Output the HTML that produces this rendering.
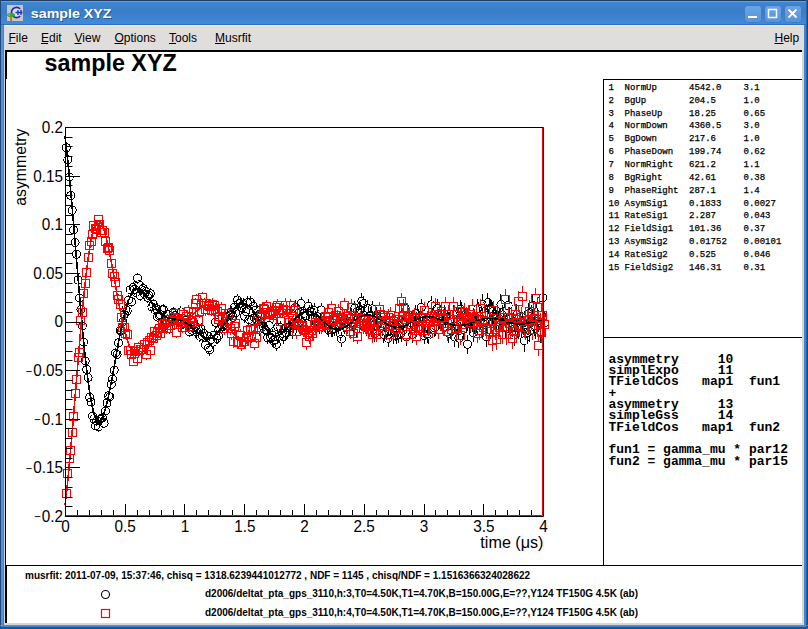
<!DOCTYPE html>
<html><head><meta charset="utf-8"><style>
html,body{margin:0;padding:0;width:808px;height:629px;overflow:hidden;background:#3c82d0;}
#win{position:absolute;left:0;top:0;width:808px;height:629px;}
svg{position:absolute;left:0;top:0;}
</style></head><body><div id="win">
<svg width="808" height="629" viewBox="0 0 808 629">
<defs>
<linearGradient id="tb" x1="0" y1="0" x2="0" y2="1">
<stop offset="0" stop-color="#3f88d6"/><stop offset="0.45" stop-color="#3a7cc6"/><stop offset="1" stop-color="#3f8cdc"/>
</linearGradient>
<linearGradient id="btn" x1="0" y1="0" x2="0" y2="1">
<stop offset="0" stop-color="#6aa6e6"/><stop offset="1" stop-color="#5592d8"/>
</linearGradient>
</defs>
<rect x="0" y="0" width="808" height="629" fill="#3d85d4"/>
<rect x="0" y="0" width="808" height="25" fill="url(#tb)"/>
<rect x="0" y="0" width="808" height="1" fill="#1d3c60"/>
<rect x="0" y="1" width="808" height="1" fill="#63a2e2"/>
<rect x="0" y="24" width="808" height="1" fill="#2f70bd"/>
<rect x="0" y="0" width="1" height="629" fill="#1f4878"/><rect x="1" y="25" width="2" height="600" fill="#4f94e0"/>
<rect x="807" y="0" width="1" height="629" fill="#1f4878"/>
<rect x="0" y="627" width="808" height="2" fill="#24528a"/><rect x="0" y="625" width="808" height="1" fill="#4a90dc"/>
<rect x="806" y="0" width="1" height="629" fill="#2a62a8"/>
<!-- icon -->
<rect x="7" y="5" width="16" height="16" fill="#c9c7c3"/>
<circle cx="16.5" cy="12.5" r="5" fill="#dcdcdc"/>
<path d="M20.2 8.9A5.1 5.1 0 1 0 20.2 16.1" fill="none" stroke="#1a2ec0" stroke-width="1.7"/>
<path d="M15.5 12.5h7M18 10v5M21 10v5" stroke="#1a2ec0" stroke-width="1.3"/>
<ellipse cx="11" cy="15" rx="4" ry="2" fill="#22b022"/>
<circle cx="9" cy="14.5" r="1.6" fill="#3cd03c"/>
<rect x="10.2" y="16" width="1.8" height="5" fill="#d06a10"/>
<text transform="translate(31.8,18.9) scale(1.08,1)" font-family="Liberation Sans" font-weight="bold" font-size="13.2" fill="#1a3050" opacity="0.5">sample XYZ</text>
<text transform="translate(30.8,18.1) scale(1.08,1)" font-family="Liberation Sans" font-weight="bold" font-size="13.2" fill="#fff">sample XYZ</text>
<!-- buttons -->
<g stroke="#3f7cc4" stroke-width="1" fill="url(#btn)">
<rect x="744.5" y="5.5" width="17" height="17" rx="3"/>
<rect x="764.5" y="5.5" width="17" height="17" rx="3"/>
<rect x="784.5" y="5.5" width="17" height="17" rx="3"/>
</g>
<rect x="748" y="16" width="9" height="2" fill="#fff"/>
<rect x="768.5" y="9.5" width="8" height="8" fill="none" stroke="#fff" stroke-width="1.5"/>
<path d="M788.5 9.5l8 8M796.5 9.5l-8 8" stroke="#fff" stroke-width="1.8"/>
<!-- menubar -->
<rect x="4" y="25" width="800" height="25" fill="#dfdedd"/>
<rect x="4" y="25" width="800" height="1" fill="#ece9e6"/>
<g font-family="Liberation Sans" font-size="12" fill="#000">
<text x="8.5" y="41.5">File</text><text x="41" y="41.5">Edit</text><text x="74.5" y="41.5">View</text>
<text x="114.5" y="41.5">Options</text><text x="169" y="41.5">Tools</text><text x="215" y="41.5">Musrfit</text>
<text x="774.5" y="41.5">Help</text>
</g>
<g fill="#000">
<rect x="8.5" y="43" width="7" height="1"/><rect x="41" y="43" width="7" height="1"/><rect x="74.5" y="43" width="7" height="1"/>
<rect x="114.5" y="43" width="9" height="1"/><rect x="169" y="43" width="7" height="1"/><rect x="215" y="43" width="10" height="1"/>
<rect x="774.5" y="43" width="9" height="1"/>
</g>
<!-- canvas -->
<rect x="4" y="50" width="800" height="575" fill="#d8d6d4"/>
<rect x="6" y="52" width="796" height="571" fill="#fff"/>
<rect x="5" y="50" width="797" height="2" fill="#000"/>
<rect x="5" y="50" width="1" height="573" fill="#000"/><rect x="6" y="50" width="1" height="29" fill="#000"/><rect x="6" y="565" width="1" height="58" fill="#000"/>
<path d="M7 565.5H802M603.5 79V565M603 79.5H802M603 337.5H802" stroke="#000" stroke-width="1"/>
<text x="44.6" y="71.3" font-family="Liberation Sans" font-weight="bold" font-size="23.3">sample XYZ</text>
<!-- plot -->
<svg x="0" y="0" width="808" height="629" overflow="visible">
<clipPath id="cp"><rect x="60" y="120" width="490" height="400"/></clipPath>
<g clip-path="url(#cp)">
<path d="M66.4 143.1V143.6M66.4 151.6V152.1M67.8 155.2V155.7M67.8 163.7V164.2M69.3 172.5V173M69.3 181V181.5M70.7 191V191.5M70.7 199.5V200.1M72.2 205.6V206.2M72.2 214.2V214.7M73.6 225.2V225.8M73.6 233.8V234.3M75.1 237.9V238.5M75.1 246.5V247.1M76.5 249.7V250.3M76.5 258.3V258.8M78 275.6V276.1M78 284.1V284.7M79.4 293.3V293.9M79.4 301.9V302.5M80.9 304.8V305.4M80.9 313.4V314M82.3 321.3V321.9M82.3 329.9V330.6M83.8 337.5V338.1M83.8 346.1V346.8M85.2 356.3V356.9M85.2 364.9V365.6M86.7 364.9V365.5M86.7 373.5V374.2M88.1 373V373.7M88.1 381.7V382.4M89.6 392.7V393.4M89.6 401.4V402.1M91 397.2V398M91 406V406.7M92.5 411.3V412M92.5 420V420.7M93.9 414.1V414.8M93.9 422.8V423.6M95.4 420.9V421.7M95.4 429.7V430.4M96.8 416V416.8M96.8 424.8V425.5M98.3 422.2V423M98.3 431V431.8M99.7 414.8V415.6M99.7 423.6V424.3M101.2 413.9V414.7M101.2 422.7V423.5M102.6 412.9V413.7M102.6 421.7V422.5M104.1 418.4V419.2M104.1 427.2V428M105.5 406.1V406.9M105.5 414.9V415.7M107 398.1V398.9M107 406.9V407.8M108.4 390.9V391.8M108.4 399.8V400.6M109.9 392V392.8M109.9 400.8V401.7M111.3 379.4V380.3M111.3 388.3V389.2M112.7 374.1V375M112.7 383V383.9M114.2 365.3V366.2M114.2 374.2V375.1M115.6 348.1V349M115.6 357V357.9M117.1 349.3V350.3M117.1 358.3V359.2M118.5 337.7V338.7M118.5 346.7V347.6M120 325.7V326.6M120 334.6V335.6M121.4 325.8V326.8M121.4 334.8V335.8M122.9 316.8V317.8M122.9 325.8V326.8M124.3 309.6V310.6M124.3 318.6V319.6M125.8 304.2V305.3M125.8 313.3V314.3M127.2 305.8V306.8M127.2 314.8V315.9M128.7 295V296M128.7 304V305.1M130.1 284.9V285.9M130.1 293.9V295M131.6 296.7V297.8M131.6 305.8V306.8M133 282.2V283.3M133 291.3V292.4M134.5 284.3V285.4M134.5 293.4V294.5M135.9 287.2V288.3M135.9 296.3V297.4M137.4 273.2V274.3M137.4 282.3V283.5M138.8 279.6V280.8M138.8 288.8V289.9M140.3 290.3V291.4M140.3 299.4V300.6M141.7 284.7V285.8M141.7 293.8V295M143.2 283.4V284.5M143.2 292.5V293.7M144.6 288.9V290.1M144.6 298.1V299.3M146.1 286.2V287.4M146.1 295.4V296.6M147.5 292V293.3M147.5 301.3V302.5M149 290.3V291.5M149 299.5V300.8M150.4 288.3V289.6M150.4 297.6V298.8M151.9 301.5V302.8M151.9 310.8V312.1M153.3 298.9V300.2M153.3 308.2V309.5M154.8 304.4V305.7M154.8 313.7V315M156.2 303.1V304.4M156.2 312.4V313.7M157.7 311.8V313.1M157.7 321.1V322.4M159.1 310V311.4M159.1 319.4V320.7M160.5 309.3V310.7M160.5 318.7V320M162 304.5V305.9M162 313.9V315.3M163.4 304.2V305.6M163.4 313.6V315M164.9 318.3V319.7M164.9 327.7V329.1M166.3 316.1V317.5M166.3 325.5V326.9M167.8 308.7V310.2M167.8 318.2V319.6M169.2 323.5V325M169.2 333V334.4M170.7 315.5V316.9M170.7 324.9V326.4M172.1 313.7V315.2M172.1 323.2V324.7M173.6 306.5V308M173.6 316V317.5M175 309.8V311.3M175 319.3V320.8M176.5 315.6V317.1M176.5 325.1V326.7M177.9 316.1V317.7M177.9 325.7V327.2M179.4 315.8V317.4M179.4 325.4V326.9M180.8 306.3V307.9M180.8 315.9V317.5M182.3 317.8V319.4M182.3 327.4V329M183.7 317.7V319.3M183.7 327.3V328.9M185.2 314.8V316.4M185.2 324.4V326M186.6 318.3V320M186.6 328V329.6M188.1 319.8V321.4M188.1 329.4V331.1M189.5 326V327.7M189.5 335.7V337.4M191 321V322.7M191 330.7V332.3M192.4 324.7V326.4M192.4 334.4V336.1M193.9 316.8V318.5M193.9 326.5V328.2M195.3 321V322.7M195.3 330.7V332.4M196.8 326.1V327.9M196.8 335.9V337.6M198.2 323.4V325.2M198.2 333.2V334.9M199.7 330.4V332.2M199.7 340.2V341.9M201.1 323.4V325.2M201.1 333.2V335M202.6 330.4V332.2M202.6 340.2V342M204 327.7V329.6M204 337.6V339.4M205.5 339.2V341.1M205.5 349.1V350.9M206.9 330V331.9M206.9 339.9V341.7M208.3 342.1V344M208.3 352V353.8M209.8 344V345.9M209.8 353.9V355.8M211.2 333.4V335.3M211.2 343.3V345.3M212.7 336.3V338.2M212.7 346.2V348.2M214.1 329.1V331M214.1 339V341M215.6 316.4V318.3M215.6 326.3V328.3M217 332.4V334.4M217 342.4V344.4M218.5 329.6V331.6M218.5 339.6V341.6M219.9 322.8V324.8M219.9 332.8V334.8M221.4 319V321.1M221.4 329.1V331.1M222.8 320.9V323M222.8 331V333M224.3 318.9V320.9M224.3 328.9V331M225.7 311.1V313.2M225.7 321.2V323.2M227.2 309.9V312M227.2 320V322M228.6 317V319.2M228.6 327.2V329.3M230.1 309V311.1M230.1 319.1V321.2M231.5 306.2V308.3M231.5 316.3V318.4M233 310.9V313.1M233 321.1V323.2M234.4 301V303.2M234.4 311.2V313.3M235.9 306.3V308.5M235.9 316.5V318.7M237.3 293.7V295.9M237.3 303.9V306.1M238.8 297.4V299.7M238.8 307.7V309.9M240.2 297.3V299.6M240.2 307.6V309.8M241.7 301.1V303.4M241.7 311.4V313.6M243.1 298V300.3M243.1 308.3V310.6M244.6 310V312.3M244.6 320.3V322.6M246 305.1V307.4M246 315.4V317.7M247.5 296.4V298.8M247.5 306.8V309.1M248.9 313.1V315.5M248.9 323.5V325.8M250.4 295.7V298.1M250.4 306.1V308.5M251.8 313.9V316.2M251.8 324.2V326.6M253.3 299.7V302.1M253.3 310.1V312.5M254.7 311.9V314.3M254.7 322.3V324.7M256.1 303.5V306M256.1 314V316.4M257.6 309.9V312.3M257.6 320.3V322.8M259 322.9V325.3M259 333.3V335.8M260.5 307V309.5M260.5 317.5V320M261.9 307.9V310.4M261.9 318.4V320.9M263.4 319.8V322.4M263.4 330.4V332.9M264.8 323.2V325.7M264.8 333.7V336.3M266.3 324.2V326.8M266.3 334.8V337.4M267.7 331.2V333.8M267.7 341.8V344.4M269.2 318.9V321.5M269.2 329.5V332.1M270.6 330.9V333.5M270.6 341.5V344.1M272.1 328.5V331.2M272.1 339.2V341.8M273.5 334.1V336.7M273.5 344.7V347.4M275 333.3V336M275 344V346.6M276.4 337.7V340.4M276.4 348.4V351.1M277.9 320.4V323.1M277.9 331.1V333.8M279.3 329.4V332.1M279.3 340.1V342.8M280.8 321V323.8M280.8 331.8V334.5M282.2 326.4V329.2M282.2 337.2V339.9M283.7 330V332.8M283.7 340.8V343.5M285.1 326.1V328.9M285.1 336.9V339.7M286.6 326.1V328.9M286.6 336.9V339.7M288 320.5V323.4M288 331.4V334.2M289.5 321.4V324.2M289.5 332.2V335.1M290.9 319.1V322M290.9 330V332.8M292.4 324.7V327.6M292.4 335.6V338.5M293.8 319V321.9M293.8 329.9V332.9M295.3 300.3V303.2M295.3 311.2V314.1M296.7 314.8V317.8M296.7 325.8V328.7M298.2 316.1V319M298.2 327V330M299.6 305.1V308.1M299.6 316.1V319M301.1 296.5V299.5M301.1 307.5V310.5M302.5 315.7V318.7M302.5 326.7V329.7M303.9 306.2V309.3M303.9 317.3V320.3M305.4 308.8V311.9M305.4 319.9V322.9M306.8 316.6V319.7M306.8 327.7V330.8M308.3 298.9V302M308.3 310V313.1M309.7 304.5V307.7M309.7 315.7V318.8M311.2 304.3V307.5M311.2 315.5V318.6M312.6 310.9V314.1M312.6 322.1V325.2M314.1 303.1V306.3M314.1 314.3V317.4M315.5 311.2V314.4M315.5 322.4V325.6M317 309.5V312.7M317 320.7V323.9M318.4 317.7V321M318.4 329V332.2M319.9 319.8V323.1M319.9 331.1V334.3M321.3 302.6V305.9M321.3 313.9V317.2M322.8 317.4V320.7M322.8 328.7V332M324.2 312.8V316.2M324.2 324.2V327.5M325.7 316.5V319.8M325.7 327.8V331.2M327.1 320.7V324.1M327.1 332.1V335.4M328.6 322.3V325.7M328.6 333.7V337.1M330 314.8V318.2M330 326.2V329.6M331.5 322.5V326M331.5 334V337.4M332.9 322.1V325.5M332.9 333.5V337M334.4 321.2V324.7M334.4 332.7V336.2M335.8 312.9V316.4M335.8 324.4V327.9M337.3 316.7V320.2M337.3 328.2V331.7M338.7 318.8V322.4M338.7 330.4V333.9M340.2 325.7V329.3M340.2 337.3V340.8M341.6 331.5V335.1M341.6 343.1V346.6M343.1 313.2V316.8M343.1 324.8V328.4M344.5 312.3V315.9M344.5 323.9V327.6M346 319.9V323.5M346 331.5V335.2M347.4 313.7V317.4M347.4 325.4V329M348.9 310.8V314.5M348.9 322.5V326.2M350.3 309.3V313M350.3 321V324.7M351.7 307.5V311.2M351.7 319.2V322.9M353.2 317V320.8M353.2 328.8V332.5M354.6 300.6V304.4M354.6 312.4V316.2M356.1 321.1V324.8M356.1 332.8V336.6M357.5 303.6V307.4M357.5 315.4V319.3M359 305.6V309.4M359 317.4V321.3M360.4 301.8V305.7M360.4 313.7V317.6M361.9 293.3V297.1M361.9 305.1V309M363.3 295.8V299.7M363.3 307.7V311.6M364.8 316.2V320.2M364.8 328.2V332.1M366.2 320.4V324.3M366.2 332.3V336.2M367.7 300.4V304.4M367.7 312.4V316.3M369.1 315.1V319.1M369.1 327.1V331.1M370.6 307.3V311.3M370.6 319.3V323.3M372 300.9V304.9M372 312.9V316.9M373.5 321.4V325.4M373.5 333.4V337.5M374.9 325.7V329.8M374.9 337.8V341.9M376.4 307.4V311.5M376.4 319.5V323.6M377.8 309.9V314M377.8 322V326.2M379.3 313.2V317.3M379.3 325.3V329.4M380.7 311.7V315.9M380.7 323.9V328.1M382.2 320V324.2M382.2 332.2V336.4M383.6 326.3V330.5M383.6 338.5V342.7M385.1 316.2V320.4M385.1 328.4V332.6M386.5 323.6V327.9M386.5 335.9V340.2M388 330V334.3M388 342.3V346.6M389.4 312.9V317.2M389.4 325.2V329.5M390.9 318.2V322.5M390.9 330.5V334.9M392.3 314.8V319.2M392.3 327.2V331.5M393.8 326.9V331.2M393.8 339.2V343.6M395.2 324.4V328.7M395.2 336.7V341.1M396.7 327.4V331.8M396.7 339.8V344.2M398.1 326.4V330.9M398.1 338.9V343.3M399.5 317.1V321.6M399.5 329.6V334.1M401 325.2V329.7M401 337.7V342.1M402.4 315.1V319.6M402.4 327.6V332.1M403.9 314.7V319.3M403.9 327.3V331.8M405.3 299.7V304.3M405.3 312.3V316.8M406.8 328.3V332.9M406.8 340.9V345.5M408.2 308V312.6M408.2 320.6V325.2M409.7 315.6V320.2M409.7 328.2V332.9M411.1 314.1V318.8M411.1 326.8V331.4M412.6 325.8V330.4M412.6 338.4V343.1M414 316.4V321.1M414 329.1V333.7M415.5 305.1V309.8M415.5 317.8V322.5M416.9 311.5V316.2M416.9 324.2V329M418.4 309.3V314.1M418.4 322.1V326.9M419.8 312V316.8M419.8 324.8V329.5M421.3 298.7V303.5M421.3 311.5V316.3M422.7 308.6V313.4M422.7 321.4V326.2M424.2 326.6V331.5M424.2 339.5V344.3M425.6 313.9V318.8M425.6 326.8V331.7M427.1 325.1V330M427.1 338V343M428.5 326.3V331.2M428.5 339.2V344.2M430 312.3V317.3M430 325.3V330.3M431.4 295.8V300.8M431.4 308.8V313.8M432.9 307.6V312.6M432.9 320.6V325.6M434.3 319V324M434.3 332V337.1M435.8 317.4V322.4M435.8 330.4V335.5M437.2 299.1V304.2M437.2 312.2V317.2M438.7 308.5V313.6M438.7 321.6V326.7M440.1 310.1V315.2M440.1 323.2V328.4M441.6 311.6V316.8M441.6 324.8V330M443 311.5V316.6M443 324.6V329.8M444.5 305V310.2M444.5 318.2V323.5M445.9 308V313.2M445.9 321.2V326.5M447.3 311.7V317M447.3 325V330.2M448.8 323.9V329.2M448.8 337.2V342.5M450.2 310V315.3M450.2 323.3V328.6M451.7 321.6V326.9M451.7 334.9V340.3M453.1 305.3V310.7M453.1 318.7V324M454.6 327.7V333.1M454.6 341.1V346.5M456 317.3V322.7M456 330.7V336.1M457.5 316.2V321.6M457.5 329.6V335.1M458.9 328.7V334.1M458.9 342.1V347.6M460.4 299.7V305.2M460.4 313.2V318.7M461.8 302V307.5M461.8 315.5V321M463.3 320V325.6M463.3 333.6V339.1M464.7 307.9V313.5M464.7 321.5V327.1M466.2 311.3V316.9M466.2 324.9V330.5M467.6 334.7V340.3M467.6 348.3V353.9M469.1 311.5V317.2M469.1 325.2V330.9M470.5 314V319.7M470.5 327.7V333.4M472 312.1V317.8M472 325.8V331.5M473.4 322.8V328.5M473.4 336.5V342.3M474.9 314.4V320.2M474.9 328.2V333.9M476.3 312.9V318.7M476.3 326.7V332.5M477.8 299V304.8M477.8 312.8V318.6M479.2 306.9V312.7M479.2 320.7V326.6M480.7 309.8V315.7M480.7 323.7V329.5M482.1 294.2V300.1M482.1 308.1V314M483.6 314.5V320.4M483.6 328.4V334.3M485 312.6V318.5M485 326.5V332.5M486.5 326.6V332.6M486.5 340.6V346.6M487.9 292.6V298.7M487.9 306.7V312.7M489.4 298.6V304.6M489.4 312.6V318.7M490.8 299.1V305.1M490.8 313.1V319.2M492.3 301.6V307.7M492.3 315.7V321.8M493.7 307.4V313.5M493.7 321.5V327.6M495.1 306.5V312.6M495.1 320.6V326.8M496.6 311.5V317.7M496.6 325.7V331.8M498 311.3V317.5M498 325.5V331.7M499.5 309V315.2M499.5 323.2V329.5M500.9 294.4V300.7M500.9 308.7V314.9M502.4 304.6V310.9M502.4 318.9V325.2M503.8 311.3V317.6M503.8 325.6V331.9M505.3 317.1V323.4M505.3 331.4V337.8M506.7 318V324.4M506.7 332.4V338.8M508.2 295.1V301.5M508.2 309.5V315.9M509.6 306.9V313.3M509.6 321.3V327.7M511.1 311.7V318.2M511.1 326.2V332.7M512.5 316.4V322.8M512.5 330.8V337.3M514 324.6V331.1M514 339.1V345.6M515.4 313.8V320.4M515.4 328.4V334.9M516.9 304V310.6M516.9 318.6V325.1M518.3 317.5V324.1M518.3 332.1V338.7M519.8 315.7V322.4M519.8 330.4V337M521.2 315.6V322.3M521.2 330.3V336.9M522.7 312V318.7M522.7 326.7V333.4M524.1 330.1V336.8M524.1 344.8V351.5M525.6 315.3V322.1M525.6 330.1V336.8M527 321.8V328.6M527 336.6V343.3M528.5 302.7V309.5M528.5 317.5V324.4M529.9 320.3V327.2M529.9 335.2V342M531.4 305.4V312.3M531.4 320.3V327.1M532.8 294.7V301.6M532.8 309.6V316.5M534.3 314.4V321.3M534.3 329.3V336.3M535.7 317.2V324.2M535.7 332.2V339.1M537.2 308.2V315.2M537.2 323.2V330.2M538.6 310V317M538.6 325V332M540.1 320.6V327.7M540.1 335.7V342.7M541.5 304.2V311.3M541.5 319.3V326.4M542.9 286.7V293.8M542.9 301.8V308.9M544.4 311.8V318.9M544.4 326.9V334" fill="none" stroke="#000" stroke-width="1" shape-rendering="crispEdges"/><path d="M62.4 147.6a4 4 0 1 0 8 0a4 4 0 1 0 -8 0M63.8 159.7a4 4 0 1 0 8 0a4 4 0 1 0 -8 0M65.3 177a4 4 0 1 0 8 0a4 4 0 1 0 -8 0M66.7 195.5a4 4 0 1 0 8 0a4 4 0 1 0 -8 0M68.2 210.2a4 4 0 1 0 8 0a4 4 0 1 0 -8 0M69.6 229.8a4 4 0 1 0 8 0a4 4 0 1 0 -8 0M71.1 242.5a4 4 0 1 0 8 0a4 4 0 1 0 -8 0M72.5 254.3a4 4 0 1 0 8 0a4 4 0 1 0 -8 0M74 280.1a4 4 0 1 0 8 0a4 4 0 1 0 -8 0M75.4 297.9a4 4 0 1 0 8 0a4 4 0 1 0 -8 0M76.9 309.4a4 4 0 1 0 8 0a4 4 0 1 0 -8 0M78.3 325.9a4 4 0 1 0 8 0a4 4 0 1 0 -8 0M79.8 342.1a4 4 0 1 0 8 0a4 4 0 1 0 -8 0M81.2 360.9a4 4 0 1 0 8 0a4 4 0 1 0 -8 0M82.7 369.5a4 4 0 1 0 8 0a4 4 0 1 0 -8 0M84.1 377.7a4 4 0 1 0 8 0a4 4 0 1 0 -8 0M85.6 397.4a4 4 0 1 0 8 0a4 4 0 1 0 -8 0M87 402a4 4 0 1 0 8 0a4 4 0 1 0 -8 0M88.5 416a4 4 0 1 0 8 0a4 4 0 1 0 -8 0M89.9 418.8a4 4 0 1 0 8 0a4 4 0 1 0 -8 0M91.4 425.7a4 4 0 1 0 8 0a4 4 0 1 0 -8 0M92.8 420.8a4 4 0 1 0 8 0a4 4 0 1 0 -8 0M94.3 427a4 4 0 1 0 8 0a4 4 0 1 0 -8 0M95.7 419.6a4 4 0 1 0 8 0a4 4 0 1 0 -8 0M97.2 418.7a4 4 0 1 0 8 0a4 4 0 1 0 -8 0M98.6 417.7a4 4 0 1 0 8 0a4 4 0 1 0 -8 0M100.1 423.2a4 4 0 1 0 8 0a4 4 0 1 0 -8 0M101.5 410.9a4 4 0 1 0 8 0a4 4 0 1 0 -8 0M103 402.9a4 4 0 1 0 8 0a4 4 0 1 0 -8 0M104.4 395.8a4 4 0 1 0 8 0a4 4 0 1 0 -8 0M105.9 396.8a4 4 0 1 0 8 0a4 4 0 1 0 -8 0M107.3 384.3a4 4 0 1 0 8 0a4 4 0 1 0 -8 0M108.7 379a4 4 0 1 0 8 0a4 4 0 1 0 -8 0M110.2 370.2a4 4 0 1 0 8 0a4 4 0 1 0 -8 0M111.6 353a4 4 0 1 0 8 0a4 4 0 1 0 -8 0M113.1 354.3a4 4 0 1 0 8 0a4 4 0 1 0 -8 0M114.5 342.7a4 4 0 1 0 8 0a4 4 0 1 0 -8 0M116 330.6a4 4 0 1 0 8 0a4 4 0 1 0 -8 0M117.4 330.8a4 4 0 1 0 8 0a4 4 0 1 0 -8 0M118.9 321.8a4 4 0 1 0 8 0a4 4 0 1 0 -8 0M120.3 314.6a4 4 0 1 0 8 0a4 4 0 1 0 -8 0M121.8 309.3a4 4 0 1 0 8 0a4 4 0 1 0 -8 0M123.2 310.8a4 4 0 1 0 8 0a4 4 0 1 0 -8 0M124.7 300a4 4 0 1 0 8 0a4 4 0 1 0 -8 0M126.1 289.9a4 4 0 1 0 8 0a4 4 0 1 0 -8 0M127.6 301.8a4 4 0 1 0 8 0a4 4 0 1 0 -8 0M129 287.3a4 4 0 1 0 8 0a4 4 0 1 0 -8 0M130.5 289.4a4 4 0 1 0 8 0a4 4 0 1 0 -8 0M131.9 292.3a4 4 0 1 0 8 0a4 4 0 1 0 -8 0M133.4 278.3a4 4 0 1 0 8 0a4 4 0 1 0 -8 0M134.8 284.8a4 4 0 1 0 8 0a4 4 0 1 0 -8 0M136.3 295.4a4 4 0 1 0 8 0a4 4 0 1 0 -8 0M137.7 289.8a4 4 0 1 0 8 0a4 4 0 1 0 -8 0M139.2 288.5a4 4 0 1 0 8 0a4 4 0 1 0 -8 0M140.6 294.1a4 4 0 1 0 8 0a4 4 0 1 0 -8 0M142.1 291.4a4 4 0 1 0 8 0a4 4 0 1 0 -8 0M143.5 297.3a4 4 0 1 0 8 0a4 4 0 1 0 -8 0M145 295.5a4 4 0 1 0 8 0a4 4 0 1 0 -8 0M146.4 293.6a4 4 0 1 0 8 0a4 4 0 1 0 -8 0M147.9 306.8a4 4 0 1 0 8 0a4 4 0 1 0 -8 0M149.3 304.2a4 4 0 1 0 8 0a4 4 0 1 0 -8 0M150.8 309.7a4 4 0 1 0 8 0a4 4 0 1 0 -8 0M152.2 308.4a4 4 0 1 0 8 0a4 4 0 1 0 -8 0M153.7 317.1a4 4 0 1 0 8 0a4 4 0 1 0 -8 0M155.1 315.4a4 4 0 1 0 8 0a4 4 0 1 0 -8 0M156.5 314.7a4 4 0 1 0 8 0a4 4 0 1 0 -8 0M158 309.9a4 4 0 1 0 8 0a4 4 0 1 0 -8 0M159.4 309.6a4 4 0 1 0 8 0a4 4 0 1 0 -8 0M160.9 323.7a4 4 0 1 0 8 0a4 4 0 1 0 -8 0M162.3 321.5a4 4 0 1 0 8 0a4 4 0 1 0 -8 0M163.8 314.2a4 4 0 1 0 8 0a4 4 0 1 0 -8 0M165.2 329a4 4 0 1 0 8 0a4 4 0 1 0 -8 0M166.7 320.9a4 4 0 1 0 8 0a4 4 0 1 0 -8 0M168.1 319.2a4 4 0 1 0 8 0a4 4 0 1 0 -8 0M169.6 312a4 4 0 1 0 8 0a4 4 0 1 0 -8 0M171 315.3a4 4 0 1 0 8 0a4 4 0 1 0 -8 0M172.5 321.1a4 4 0 1 0 8 0a4 4 0 1 0 -8 0M173.9 321.7a4 4 0 1 0 8 0a4 4 0 1 0 -8 0M175.4 321.4a4 4 0 1 0 8 0a4 4 0 1 0 -8 0M176.8 311.9a4 4 0 1 0 8 0a4 4 0 1 0 -8 0M178.3 323.4a4 4 0 1 0 8 0a4 4 0 1 0 -8 0M179.7 323.3a4 4 0 1 0 8 0a4 4 0 1 0 -8 0M181.2 320.4a4 4 0 1 0 8 0a4 4 0 1 0 -8 0M182.6 324a4 4 0 1 0 8 0a4 4 0 1 0 -8 0M184.1 325.4a4 4 0 1 0 8 0a4 4 0 1 0 -8 0M185.5 331.7a4 4 0 1 0 8 0a4 4 0 1 0 -8 0M187 326.7a4 4 0 1 0 8 0a4 4 0 1 0 -8 0M188.4 330.4a4 4 0 1 0 8 0a4 4 0 1 0 -8 0M189.9 322.5a4 4 0 1 0 8 0a4 4 0 1 0 -8 0M191.3 326.7a4 4 0 1 0 8 0a4 4 0 1 0 -8 0M192.8 331.9a4 4 0 1 0 8 0a4 4 0 1 0 -8 0M194.2 329.2a4 4 0 1 0 8 0a4 4 0 1 0 -8 0M195.7 336.2a4 4 0 1 0 8 0a4 4 0 1 0 -8 0M197.1 329.2a4 4 0 1 0 8 0a4 4 0 1 0 -8 0M198.6 336.2a4 4 0 1 0 8 0a4 4 0 1 0 -8 0M200 333.6a4 4 0 1 0 8 0a4 4 0 1 0 -8 0M201.5 345.1a4 4 0 1 0 8 0a4 4 0 1 0 -8 0M202.9 335.9a4 4 0 1 0 8 0a4 4 0 1 0 -8 0M204.3 348a4 4 0 1 0 8 0a4 4 0 1 0 -8 0M205.8 349.9a4 4 0 1 0 8 0a4 4 0 1 0 -8 0M207.2 339.3a4 4 0 1 0 8 0a4 4 0 1 0 -8 0M208.7 342.2a4 4 0 1 0 8 0a4 4 0 1 0 -8 0M210.1 335a4 4 0 1 0 8 0a4 4 0 1 0 -8 0M211.6 322.3a4 4 0 1 0 8 0a4 4 0 1 0 -8 0M213 338.4a4 4 0 1 0 8 0a4 4 0 1 0 -8 0M214.5 335.6a4 4 0 1 0 8 0a4 4 0 1 0 -8 0M215.9 328.8a4 4 0 1 0 8 0a4 4 0 1 0 -8 0M217.4 325.1a4 4 0 1 0 8 0a4 4 0 1 0 -8 0M218.8 327a4 4 0 1 0 8 0a4 4 0 1 0 -8 0M220.3 324.9a4 4 0 1 0 8 0a4 4 0 1 0 -8 0M221.7 317.2a4 4 0 1 0 8 0a4 4 0 1 0 -8 0M223.2 316a4 4 0 1 0 8 0a4 4 0 1 0 -8 0M224.6 323.2a4 4 0 1 0 8 0a4 4 0 1 0 -8 0M226.1 315.1a4 4 0 1 0 8 0a4 4 0 1 0 -8 0M227.5 312.3a4 4 0 1 0 8 0a4 4 0 1 0 -8 0M229 317.1a4 4 0 1 0 8 0a4 4 0 1 0 -8 0M230.4 307.2a4 4 0 1 0 8 0a4 4 0 1 0 -8 0M231.9 312.5a4 4 0 1 0 8 0a4 4 0 1 0 -8 0M233.3 299.9a4 4 0 1 0 8 0a4 4 0 1 0 -8 0M234.8 303.7a4 4 0 1 0 8 0a4 4 0 1 0 -8 0M236.2 303.6a4 4 0 1 0 8 0a4 4 0 1 0 -8 0M237.7 307.4a4 4 0 1 0 8 0a4 4 0 1 0 -8 0M239.1 304.3a4 4 0 1 0 8 0a4 4 0 1 0 -8 0M240.6 316.3a4 4 0 1 0 8 0a4 4 0 1 0 -8 0M242 311.4a4 4 0 1 0 8 0a4 4 0 1 0 -8 0M243.5 302.8a4 4 0 1 0 8 0a4 4 0 1 0 -8 0M244.9 319.5a4 4 0 1 0 8 0a4 4 0 1 0 -8 0M246.4 302.1a4 4 0 1 0 8 0a4 4 0 1 0 -8 0M247.8 320.2a4 4 0 1 0 8 0a4 4 0 1 0 -8 0M249.3 306.1a4 4 0 1 0 8 0a4 4 0 1 0 -8 0M250.7 318.3a4 4 0 1 0 8 0a4 4 0 1 0 -8 0M252.1 310a4 4 0 1 0 8 0a4 4 0 1 0 -8 0M253.6 316.3a4 4 0 1 0 8 0a4 4 0 1 0 -8 0M255 329.3a4 4 0 1 0 8 0a4 4 0 1 0 -8 0M256.5 313.5a4 4 0 1 0 8 0a4 4 0 1 0 -8 0M257.9 314.4a4 4 0 1 0 8 0a4 4 0 1 0 -8 0M259.4 326.4a4 4 0 1 0 8 0a4 4 0 1 0 -8 0M260.8 329.7a4 4 0 1 0 8 0a4 4 0 1 0 -8 0M262.3 330.8a4 4 0 1 0 8 0a4 4 0 1 0 -8 0M263.7 337.8a4 4 0 1 0 8 0a4 4 0 1 0 -8 0M265.2 325.5a4 4 0 1 0 8 0a4 4 0 1 0 -8 0M266.6 337.5a4 4 0 1 0 8 0a4 4 0 1 0 -8 0M268.1 335.2a4 4 0 1 0 8 0a4 4 0 1 0 -8 0M269.5 340.7a4 4 0 1 0 8 0a4 4 0 1 0 -8 0M271 340a4 4 0 1 0 8 0a4 4 0 1 0 -8 0M272.4 344.4a4 4 0 1 0 8 0a4 4 0 1 0 -8 0M273.9 327.1a4 4 0 1 0 8 0a4 4 0 1 0 -8 0M275.3 336.1a4 4 0 1 0 8 0a4 4 0 1 0 -8 0M276.8 327.8a4 4 0 1 0 8 0a4 4 0 1 0 -8 0M278.2 333.2a4 4 0 1 0 8 0a4 4 0 1 0 -8 0M279.7 336.8a4 4 0 1 0 8 0a4 4 0 1 0 -8 0M281.1 332.9a4 4 0 1 0 8 0a4 4 0 1 0 -8 0M282.6 332.9a4 4 0 1 0 8 0a4 4 0 1 0 -8 0M284 327.4a4 4 0 1 0 8 0a4 4 0 1 0 -8 0M285.5 328.2a4 4 0 1 0 8 0a4 4 0 1 0 -8 0M286.9 326a4 4 0 1 0 8 0a4 4 0 1 0 -8 0M288.4 331.6a4 4 0 1 0 8 0a4 4 0 1 0 -8 0M289.8 325.9a4 4 0 1 0 8 0a4 4 0 1 0 -8 0M291.3 307.2a4 4 0 1 0 8 0a4 4 0 1 0 -8 0M292.7 321.8a4 4 0 1 0 8 0a4 4 0 1 0 -8 0M294.2 323a4 4 0 1 0 8 0a4 4 0 1 0 -8 0M295.6 312.1a4 4 0 1 0 8 0a4 4 0 1 0 -8 0M297.1 303.5a4 4 0 1 0 8 0a4 4 0 1 0 -8 0M298.5 322.7a4 4 0 1 0 8 0a4 4 0 1 0 -8 0M299.9 313.3a4 4 0 1 0 8 0a4 4 0 1 0 -8 0M301.4 315.9a4 4 0 1 0 8 0a4 4 0 1 0 -8 0M302.8 323.7a4 4 0 1 0 8 0a4 4 0 1 0 -8 0M304.3 306a4 4 0 1 0 8 0a4 4 0 1 0 -8 0M305.7 311.7a4 4 0 1 0 8 0a4 4 0 1 0 -8 0M307.2 311.5a4 4 0 1 0 8 0a4 4 0 1 0 -8 0M308.6 318.1a4 4 0 1 0 8 0a4 4 0 1 0 -8 0M310.1 310.3a4 4 0 1 0 8 0a4 4 0 1 0 -8 0M311.5 318.4a4 4 0 1 0 8 0a4 4 0 1 0 -8 0M313 316.7a4 4 0 1 0 8 0a4 4 0 1 0 -8 0M314.4 325a4 4 0 1 0 8 0a4 4 0 1 0 -8 0M315.9 327.1a4 4 0 1 0 8 0a4 4 0 1 0 -8 0M317.3 309.9a4 4 0 1 0 8 0a4 4 0 1 0 -8 0M318.8 324.7a4 4 0 1 0 8 0a4 4 0 1 0 -8 0M320.2 320.2a4 4 0 1 0 8 0a4 4 0 1 0 -8 0M321.7 323.8a4 4 0 1 0 8 0a4 4 0 1 0 -8 0M323.1 328.1a4 4 0 1 0 8 0a4 4 0 1 0 -8 0M324.6 329.7a4 4 0 1 0 8 0a4 4 0 1 0 -8 0M326 322.2a4 4 0 1 0 8 0a4 4 0 1 0 -8 0M327.5 330a4 4 0 1 0 8 0a4 4 0 1 0 -8 0M328.9 329.5a4 4 0 1 0 8 0a4 4 0 1 0 -8 0M330.4 328.7a4 4 0 1 0 8 0a4 4 0 1 0 -8 0M331.8 320.4a4 4 0 1 0 8 0a4 4 0 1 0 -8 0M333.3 324.2a4 4 0 1 0 8 0a4 4 0 1 0 -8 0M334.7 326.4a4 4 0 1 0 8 0a4 4 0 1 0 -8 0M336.2 333.3a4 4 0 1 0 8 0a4 4 0 1 0 -8 0M337.6 339.1a4 4 0 1 0 8 0a4 4 0 1 0 -8 0M339.1 320.8a4 4 0 1 0 8 0a4 4 0 1 0 -8 0M340.5 319.9a4 4 0 1 0 8 0a4 4 0 1 0 -8 0M342 327.5a4 4 0 1 0 8 0a4 4 0 1 0 -8 0M343.4 321.4a4 4 0 1 0 8 0a4 4 0 1 0 -8 0M344.9 318.5a4 4 0 1 0 8 0a4 4 0 1 0 -8 0M346.3 317a4 4 0 1 0 8 0a4 4 0 1 0 -8 0M347.7 315.2a4 4 0 1 0 8 0a4 4 0 1 0 -8 0M349.2 324.8a4 4 0 1 0 8 0a4 4 0 1 0 -8 0M350.6 308.4a4 4 0 1 0 8 0a4 4 0 1 0 -8 0M352.1 328.8a4 4 0 1 0 8 0a4 4 0 1 0 -8 0M353.5 311.4a4 4 0 1 0 8 0a4 4 0 1 0 -8 0M355 313.4a4 4 0 1 0 8 0a4 4 0 1 0 -8 0M356.4 309.7a4 4 0 1 0 8 0a4 4 0 1 0 -8 0M357.9 301.1a4 4 0 1 0 8 0a4 4 0 1 0 -8 0M359.3 303.7a4 4 0 1 0 8 0a4 4 0 1 0 -8 0M360.8 324.2a4 4 0 1 0 8 0a4 4 0 1 0 -8 0M362.2 328.3a4 4 0 1 0 8 0a4 4 0 1 0 -8 0M363.7 308.4a4 4 0 1 0 8 0a4 4 0 1 0 -8 0M365.1 323.1a4 4 0 1 0 8 0a4 4 0 1 0 -8 0M366.6 315.3a4 4 0 1 0 8 0a4 4 0 1 0 -8 0M368 308.9a4 4 0 1 0 8 0a4 4 0 1 0 -8 0M369.5 329.4a4 4 0 1 0 8 0a4 4 0 1 0 -8 0M370.9 333.8a4 4 0 1 0 8 0a4 4 0 1 0 -8 0M372.4 315.5a4 4 0 1 0 8 0a4 4 0 1 0 -8 0M373.8 318a4 4 0 1 0 8 0a4 4 0 1 0 -8 0M375.3 321.3a4 4 0 1 0 8 0a4 4 0 1 0 -8 0M376.7 319.9a4 4 0 1 0 8 0a4 4 0 1 0 -8 0M378.2 328.2a4 4 0 1 0 8 0a4 4 0 1 0 -8 0M379.6 334.5a4 4 0 1 0 8 0a4 4 0 1 0 -8 0M381.1 324.4a4 4 0 1 0 8 0a4 4 0 1 0 -8 0M382.5 331.9a4 4 0 1 0 8 0a4 4 0 1 0 -8 0M384 338.3a4 4 0 1 0 8 0a4 4 0 1 0 -8 0M385.4 321.2a4 4 0 1 0 8 0a4 4 0 1 0 -8 0M386.9 326.5a4 4 0 1 0 8 0a4 4 0 1 0 -8 0M388.3 323.2a4 4 0 1 0 8 0a4 4 0 1 0 -8 0M389.8 335.2a4 4 0 1 0 8 0a4 4 0 1 0 -8 0M391.2 332.7a4 4 0 1 0 8 0a4 4 0 1 0 -8 0M392.7 335.8a4 4 0 1 0 8 0a4 4 0 1 0 -8 0M394.1 334.9a4 4 0 1 0 8 0a4 4 0 1 0 -8 0M395.5 325.6a4 4 0 1 0 8 0a4 4 0 1 0 -8 0M397 333.7a4 4 0 1 0 8 0a4 4 0 1 0 -8 0M398.4 323.6a4 4 0 1 0 8 0a4 4 0 1 0 -8 0M399.9 323.3a4 4 0 1 0 8 0a4 4 0 1 0 -8 0M401.3 308.3a4 4 0 1 0 8 0a4 4 0 1 0 -8 0M402.8 336.9a4 4 0 1 0 8 0a4 4 0 1 0 -8 0M404.2 316.6a4 4 0 1 0 8 0a4 4 0 1 0 -8 0M405.7 324.2a4 4 0 1 0 8 0a4 4 0 1 0 -8 0M407.1 322.8a4 4 0 1 0 8 0a4 4 0 1 0 -8 0M408.6 334.4a4 4 0 1 0 8 0a4 4 0 1 0 -8 0M410 325.1a4 4 0 1 0 8 0a4 4 0 1 0 -8 0M411.5 313.8a4 4 0 1 0 8 0a4 4 0 1 0 -8 0M412.9 320.2a4 4 0 1 0 8 0a4 4 0 1 0 -8 0M414.4 318.1a4 4 0 1 0 8 0a4 4 0 1 0 -8 0M415.8 320.8a4 4 0 1 0 8 0a4 4 0 1 0 -8 0M417.3 307.5a4 4 0 1 0 8 0a4 4 0 1 0 -8 0M418.7 317.4a4 4 0 1 0 8 0a4 4 0 1 0 -8 0M420.2 335.5a4 4 0 1 0 8 0a4 4 0 1 0 -8 0M421.6 322.8a4 4 0 1 0 8 0a4 4 0 1 0 -8 0M423.1 334a4 4 0 1 0 8 0a4 4 0 1 0 -8 0M424.5 335.2a4 4 0 1 0 8 0a4 4 0 1 0 -8 0M426 321.3a4 4 0 1 0 8 0a4 4 0 1 0 -8 0M427.4 304.8a4 4 0 1 0 8 0a4 4 0 1 0 -8 0M428.9 316.6a4 4 0 1 0 8 0a4 4 0 1 0 -8 0M430.3 328a4 4 0 1 0 8 0a4 4 0 1 0 -8 0M431.8 326.4a4 4 0 1 0 8 0a4 4 0 1 0 -8 0M433.2 308.2a4 4 0 1 0 8 0a4 4 0 1 0 -8 0M434.7 317.6a4 4 0 1 0 8 0a4 4 0 1 0 -8 0M436.1 319.2a4 4 0 1 0 8 0a4 4 0 1 0 -8 0M437.6 320.8a4 4 0 1 0 8 0a4 4 0 1 0 -8 0M439 320.6a4 4 0 1 0 8 0a4 4 0 1 0 -8 0M440.5 314.2a4 4 0 1 0 8 0a4 4 0 1 0 -8 0M441.9 317.2a4 4 0 1 0 8 0a4 4 0 1 0 -8 0M443.3 321a4 4 0 1 0 8 0a4 4 0 1 0 -8 0M444.8 333.2a4 4 0 1 0 8 0a4 4 0 1 0 -8 0M446.2 319.3a4 4 0 1 0 8 0a4 4 0 1 0 -8 0M447.7 330.9a4 4 0 1 0 8 0a4 4 0 1 0 -8 0M449.1 314.7a4 4 0 1 0 8 0a4 4 0 1 0 -8 0M450.6 337.1a4 4 0 1 0 8 0a4 4 0 1 0 -8 0M452 326.7a4 4 0 1 0 8 0a4 4 0 1 0 -8 0M453.5 325.6a4 4 0 1 0 8 0a4 4 0 1 0 -8 0M454.9 338.1a4 4 0 1 0 8 0a4 4 0 1 0 -8 0M456.4 309.2a4 4 0 1 0 8 0a4 4 0 1 0 -8 0M457.8 311.5a4 4 0 1 0 8 0a4 4 0 1 0 -8 0M459.3 329.6a4 4 0 1 0 8 0a4 4 0 1 0 -8 0M460.7 317.5a4 4 0 1 0 8 0a4 4 0 1 0 -8 0M462.2 320.9a4 4 0 1 0 8 0a4 4 0 1 0 -8 0M463.6 344.3a4 4 0 1 0 8 0a4 4 0 1 0 -8 0M465.1 321.2a4 4 0 1 0 8 0a4 4 0 1 0 -8 0M466.5 323.7a4 4 0 1 0 8 0a4 4 0 1 0 -8 0M468 321.8a4 4 0 1 0 8 0a4 4 0 1 0 -8 0M469.4 332.5a4 4 0 1 0 8 0a4 4 0 1 0 -8 0M470.9 324.2a4 4 0 1 0 8 0a4 4 0 1 0 -8 0M472.3 322.7a4 4 0 1 0 8 0a4 4 0 1 0 -8 0M473.8 308.8a4 4 0 1 0 8 0a4 4 0 1 0 -8 0M475.2 316.7a4 4 0 1 0 8 0a4 4 0 1 0 -8 0M476.7 319.7a4 4 0 1 0 8 0a4 4 0 1 0 -8 0M478.1 304.1a4 4 0 1 0 8 0a4 4 0 1 0 -8 0M479.6 324.4a4 4 0 1 0 8 0a4 4 0 1 0 -8 0M481 322.5a4 4 0 1 0 8 0a4 4 0 1 0 -8 0M482.5 336.6a4 4 0 1 0 8 0a4 4 0 1 0 -8 0M483.9 302.7a4 4 0 1 0 8 0a4 4 0 1 0 -8 0M485.4 308.6a4 4 0 1 0 8 0a4 4 0 1 0 -8 0M486.8 309.1a4 4 0 1 0 8 0a4 4 0 1 0 -8 0M488.3 311.7a4 4 0 1 0 8 0a4 4 0 1 0 -8 0M489.7 317.5a4 4 0 1 0 8 0a4 4 0 1 0 -8 0M491.1 316.6a4 4 0 1 0 8 0a4 4 0 1 0 -8 0M492.6 321.7a4 4 0 1 0 8 0a4 4 0 1 0 -8 0M494 321.5a4 4 0 1 0 8 0a4 4 0 1 0 -8 0M495.5 319.2a4 4 0 1 0 8 0a4 4 0 1 0 -8 0M496.9 304.7a4 4 0 1 0 8 0a4 4 0 1 0 -8 0M498.4 314.9a4 4 0 1 0 8 0a4 4 0 1 0 -8 0M499.8 321.6a4 4 0 1 0 8 0a4 4 0 1 0 -8 0M501.3 327.4a4 4 0 1 0 8 0a4 4 0 1 0 -8 0M502.7 328.4a4 4 0 1 0 8 0a4 4 0 1 0 -8 0M504.2 305.5a4 4 0 1 0 8 0a4 4 0 1 0 -8 0M505.6 317.3a4 4 0 1 0 8 0a4 4 0 1 0 -8 0M507.1 322.2a4 4 0 1 0 8 0a4 4 0 1 0 -8 0M508.5 326.8a4 4 0 1 0 8 0a4 4 0 1 0 -8 0M510 335.1a4 4 0 1 0 8 0a4 4 0 1 0 -8 0M511.4 324.4a4 4 0 1 0 8 0a4 4 0 1 0 -8 0M512.9 314.6a4 4 0 1 0 8 0a4 4 0 1 0 -8 0M514.3 328.1a4 4 0 1 0 8 0a4 4 0 1 0 -8 0M515.8 326.4a4 4 0 1 0 8 0a4 4 0 1 0 -8 0M517.2 326.3a4 4 0 1 0 8 0a4 4 0 1 0 -8 0M518.7 322.7a4 4 0 1 0 8 0a4 4 0 1 0 -8 0M520.1 340.8a4 4 0 1 0 8 0a4 4 0 1 0 -8 0M521.6 326.1a4 4 0 1 0 8 0a4 4 0 1 0 -8 0M523 332.6a4 4 0 1 0 8 0a4 4 0 1 0 -8 0M524.5 313.5a4 4 0 1 0 8 0a4 4 0 1 0 -8 0M525.9 331.2a4 4 0 1 0 8 0a4 4 0 1 0 -8 0M527.4 316.3a4 4 0 1 0 8 0a4 4 0 1 0 -8 0M528.8 305.6a4 4 0 1 0 8 0a4 4 0 1 0 -8 0M530.3 325.3a4 4 0 1 0 8 0a4 4 0 1 0 -8 0M531.7 328.2a4 4 0 1 0 8 0a4 4 0 1 0 -8 0M533.2 319.2a4 4 0 1 0 8 0a4 4 0 1 0 -8 0M534.6 321a4 4 0 1 0 8 0a4 4 0 1 0 -8 0M536.1 331.7a4 4 0 1 0 8 0a4 4 0 1 0 -8 0M537.5 315.3a4 4 0 1 0 8 0a4 4 0 1 0 -8 0M538.9 297.8a4 4 0 1 0 8 0a4 4 0 1 0 -8 0M540.4 322.9a4 4 0 1 0 8 0a4 4 0 1 0 -8 0" fill="none" stroke="#000" stroke-width="1" shape-rendering="crispEdges"/><path d="M66.4 488.7V489.2M66.4 497.2V497.7M67.8 468.9V469.4M67.8 477.4V477.9M69.3 454.4V454.9M69.3 462.9V463.4M70.7 446.1V446.6M70.7 454.6V455.2M72.2 428.3V428.8M72.2 436.8V437.4M73.6 412V412.5M73.6 420.5V421.1M75.1 389.3V389.9M75.1 397.9V398.4M76.5 374.4V375M76.5 383V383.6M78 353.2V353.8M78 361.8V362.4M79.4 348V348.6M79.4 356.6V357.2M80.9 315.7V316.3M80.9 324.3V324.9M82.3 307.5V308.1M82.3 316.1V316.8M83.8 289V289.6M83.8 297.6V298.3M85.2 279V279.6M85.2 287.6V288.3M86.7 267.5V268.2M86.7 276.2V276.8M88.1 252.3V253M88.1 261V261.6M89.6 240.7V241.4M89.6 249.4V250.1M91 237.1V237.8M91 245.8V246.5M92.5 229.9V230.6M92.5 238.6V239.3M93.9 220.5V221.2M93.9 229.2V230M95.4 224V224.7M95.4 232.7V233.5M96.8 224.6V225.4M96.8 233.4V234.1M98.3 214.6V215.3M98.3 223.3V224.1M99.7 220.1V220.9M99.7 228.9V229.6M101.2 227.8V228.6M101.2 236.6V237.4M102.6 225.4V226.2M102.6 234.2V235M104.1 227.7V228.5M104.1 236.5V237.4M105.5 236.2V237M105.5 245V245.9M107 243.5V244.3M107 252.3V253.2M108.4 242.6V243.5M108.4 251.5V252.3M109.9 245.5V246.4M109.9 254.4V255.3M111.3 258.6V259.5M111.3 267.5V268.4M112.7 269V269.9M112.7 277.9V278.8M114.2 271.5V272.4M114.2 280.4V281.3M115.6 277.9V278.8M115.6 286.8V287.7M117.1 290.9V291.8M117.1 299.8V300.7M118.5 294.4V295.4M118.5 303.4V304.4M120 299.4V300.4M120 308.4V309.4M121.4 312.7V313.7M121.4 321.7V322.7M122.9 322.3V323.3M122.9 331.3V332.3M124.3 322.6V323.6M124.3 331.6V332.6M125.8 328.5V329.5M125.8 337.5V338.6M127.2 329V330.1M127.2 338.1V339.1M128.7 345.2V346.2M128.7 354.2V355.3M130.1 345.5V346.6M130.1 354.6V355.6M131.6 349.2V350.3M131.6 358.3V359.3M133 355.9V357M133 365V366.1M134.5 347.9V349M134.5 357V358.1M135.9 346.7V347.8M135.9 355.8V356.9M137.4 353.5V354.6M137.4 362.6V363.8M138.8 342.3V343.5M138.8 351.5V352.6M140.3 344.6V345.7M140.3 353.7V354.9M141.7 344.5V345.7M141.7 353.7V354.8M143.2 344.2V345.4M143.2 353.4V354.6M144.6 339.6V340.8M144.6 348.8V350.1M146.1 349.7V350.9M146.1 358.9V360.1M147.5 337.5V338.7M147.5 346.7V347.9M149 335.4V336.6M149 344.6V345.9M150.4 345.7V346.9M150.4 354.9V356.2M151.9 332.4V333.7M151.9 341.7V342.9M153.3 333.4V334.7M153.3 342.7V344M154.8 326V327.3M154.8 335.3V336.6M156.2 330.6V331.9M156.2 339.9V341.3M157.7 326.7V328M157.7 336V337.4M159.1 323.2V324.6M159.1 332.6V333.9M160.5 328.4V329.8M160.5 337.8V339.2M162 319.3V320.7M162 328.7V330.1M163.4 322.1V323.5M163.4 331.5V332.9M164.9 318.1V319.5M164.9 327.5V328.9M166.3 323V324.4M166.3 332.4V333.8M167.8 313.7V315.1M167.8 323.1V324.6M169.2 315.9V317.4M169.2 325.4V326.8M170.7 319.9V321.3M170.7 329.3V330.8M172.1 315.2V316.6M172.1 324.6V326.1M173.6 311.5V313M173.6 321V322.5M175 308.3V309.8M175 317.8V319.3M176.5 326.6V328.1M176.5 336.1V337.7M177.9 312.7V314.2M177.9 322.2V323.8M179.4 314.6V316.2M179.4 324.2V325.7M180.8 317.3V318.8M180.8 326.8V328.4M182.3 321.8V323.4M182.3 331.4V333M183.7 308.4V310M183.7 318V319.7M185.2 321.8V323.4M185.2 331.4V333M186.6 310.6V312.2M186.6 320.2V321.9M188.1 305.4V307M188.1 315V316.7M189.5 320.7V322.4M189.5 330.4V332M191 312.1V313.8M191 321.8V323.5M192.4 316.6V318.3M192.4 326.3V328M193.9 306.5V308.2M193.9 316.2V317.9M195.3 297.9V299.6M195.3 307.6V309.3M196.8 293.6V295.4M196.8 303.4V305.1M198.2 314.3V316M198.2 324V325.8M199.7 306.2V307.9M199.7 315.9V317.7M201.1 297.7V299.5M201.1 307.5V309.3M202.6 291.7V293.5M202.6 301.5V303.3M204 297.7V299.5M204 307.5V309.3M205.5 303.9V305.8M205.5 313.8V315.6M206.9 297.5V299.4M206.9 307.4V309.2M208.3 299.2V301.1M208.3 309.1V311M209.8 300.5V302.4M209.8 310.4V312.3M211.2 304V306M211.2 314V315.9M212.7 298.1V300M212.7 308V309.9M214.1 299.5V301.4M214.1 309.4V311.4M215.6 303.1V305M215.6 313V315M217 305.2V307.2M217 315.2V317.2M218.5 313.3V315.2M218.5 323.2V325.2M219.9 310.3V312.3M219.9 320.3V322.3M221.4 302.1V304.1M221.4 312.1V314.2M222.8 312.6V314.7M222.8 322.7V324.7M224.3 322.4V324.5M224.3 332.5V334.6M225.7 307.9V309.9M225.7 317.9V320M227.2 315V317.1M227.2 325.1V327.2M228.6 307.7V309.8M228.6 317.8V319.9M230.1 322.3V324.4M230.1 332.4V334.6M231.5 327.6V329.7M231.5 337.7V339.9M233 335.6V337.7M233 345.7V347.9M234.4 320.2V322.4M234.4 330.4V332.6M235.9 316.9V319.1M235.9 327.1V329.3M237.3 336.2V338.4M237.3 346.4V348.7M238.8 336.1V338.4M238.8 346.4V348.6M240.2 329V331.3M240.2 339.3V341.5M241.7 338.3V340.6M241.7 348.6V350.9M243.1 334.9V337.2M243.1 345.2V347.4M244.6 335.1V337.4M244.6 345.4V347.7M246 331.1V333.4M246 341.4V343.7M247.5 324.5V326.8M247.5 334.8V337.2M248.9 330.1V332.5M248.9 340.5V342.8M250.4 323V325.4M250.4 333.4V335.7M251.8 329.9V332.3M251.8 340.3V342.7M253.3 323.2V325.6M253.3 333.6V336.1M254.7 336.8V339.2M254.7 347.2V349.7M256.1 330.5V333M256.1 341V343.4M257.6 313.8V316.3M257.6 324.3V326.7M259 320.5V323M259 331V333.5M260.5 310.7V313.2M260.5 321.2V323.7M261.9 308.7V311.2M261.9 319.2V321.7M263.4 301.5V304M263.4 312V314.6M264.8 302.9V305.4M264.8 313.4V315.9M266.3 299.7V302.2M266.3 310.2V312.8M267.7 305.5V308.1M267.7 316.1V318.6M269.2 308V310.6M269.2 318.6V321.2M270.6 307.1V309.7M270.6 317.7V320.3M272.1 304.6V307.2M272.1 315.2V317.9M273.5 308.3V311M273.5 319V321.6M275 304.1V306.8M275 314.8V317.5M276.4 301.1V303.8M276.4 311.8V314.5M277.9 299.1V301.8M277.9 309.8V312.5M279.3 303.6V306.3M279.3 314.3V317M280.8 315.1V317.8M280.8 325.8V328.6M282.2 303.6V306.4M282.2 314.4V317.2M283.7 302.9V305.6M283.7 313.6V316.4M285.1 298.4V301.2M285.1 309.2V312M286.6 303.4V306.2M286.6 314.2V317.1M288 313.4V316.3M288 324.3V327.1M289.5 315.7V318.6M289.5 326.6V329.5M290.9 298.7V301.6M290.9 309.6V312.5M292.4 309.1V312M292.4 320V322.9M293.8 303.4V306.3M293.8 314.3V317.2M295.3 303.1V306.1M295.3 314.1V317M296.7 324.9V327.9M296.7 335.9V338.8M298.2 317.9V320.9M298.2 328.9V331.9M299.6 318.6V321.6M299.6 329.6V332.6M301.1 318.9V321.9M301.1 329.9V332.9M302.5 319.9V322.9M302.5 330.9V333.9M303.9 322.8V325.9M303.9 333.9V336.9M305.4 323.4V326.5M305.4 334.5V337.5M306.8 335.4V338.5M306.8 346.5V349.6M308.3 325.8V328.9M308.3 336.9V340M309.7 329.7V332.8M309.7 340.8V343.9M311.2 322.9V326M311.2 334V337.2M312.6 326.4V329.6M312.6 337.6V340.7M314.1 317.7V320.9M314.1 328.9V332.1M315.5 315.2V318.4M315.5 326.4V329.6M317 317.7V320.9M317 328.9V332.1M318.4 316.3V319.6M318.4 327.6V330.8M319.9 316.6V319.9M319.9 327.9V331.1M321.3 319.1V322.4M321.3 330.4V333.7M322.8 315.7V319M322.8 327V330.3M324.2 316.8V320.1M324.2 328.1V331.4M325.7 309V312.3M325.7 320.3V323.7M327.1 310.5V313.9M327.1 321.9V325.3M328.6 305.2V308.6M328.6 316.6V320M330 318.4V321.8M330 329.8V333.2M331.5 301.1V304.5M331.5 312.5V316M332.9 312.7V316.2M332.9 324.2V327.6M334.4 312.1V315.5M334.4 323.5V327M335.8 307.8V311.2M335.8 319.2V322.7M337.3 310.4V313.9M337.3 321.9V325.4M338.7 304V307.6M338.7 315.6V319.1M340.2 310.8V314.4M340.2 322.4V325.9M341.6 315V318.6M341.6 326.6V330.2M343.1 313.9V317.5M343.1 325.5V329.1M344.5 298.2V301.8M344.5 309.8V313.4M346 308.7V312.3M346 320.3V324M347.4 318.9V322.6M347.4 330.6V334.2M348.9 310.9V314.6M348.9 322.6V326.3M350.3 324V327.7M350.3 335.7V339.4M351.7 299.3V303M351.7 311V314.7M353.2 326V329.8M353.2 337.8V341.5M354.6 311.5V315.3M354.6 323.3V327.1M356.1 312V315.8M356.1 323.8V327.6M357.5 328.5V332.3M357.5 340.3V344.1M359 315.6V319.5M359 327.5V331.3M360.4 310.9V314.7M360.4 322.7V326.6M361.9 315.6V319.5M361.9 327.5V331.4M363.3 317.7V321.6M363.3 329.6V333.5M364.8 312.5V316.4M364.8 324.4V328.4M366.2 318.9V322.8M366.2 330.8V334.8M367.7 317.5V321.5M367.7 329.5V333.4M369.1 321V325M369.1 333V337M370.6 314.6V318.6M370.6 326.6V330.7M372 326.8V330.8M372 338.8V342.9M373.5 312.3V316.3M373.5 324.3V328.4M374.9 322.1V326.1M374.9 334.1V338.2M376.4 326V330.1M376.4 338.1V342.2M377.8 313.4V317.5M377.8 325.5V329.6M379.3 301.6V305.8M379.3 313.8V317.9M380.7 306.6V310.8M380.7 318.8V322.9M382.2 317.7V321.9M382.2 329.9V334.1M383.6 306.8V311M383.6 319V323.2M385.1 315.3V319.6M385.1 327.6V331.8M386.5 311.7V316M386.5 324V328.2M388 309.2V313.4M388 321.4V325.7M389.4 326.6V330.9M389.4 338.9V343.2M390.9 306.9V311.3M390.9 319.3V323.6M392.3 316.6V321M392.3 329V333.3M393.8 313.5V317.8M393.8 325.8V330.2M395.2 319.7V324.1M395.2 332.1V336.5M396.7 320V324.4M396.7 332.4V336.8M398.1 315.1V319.6M398.1 327.6V332M399.5 300.3V304.8M399.5 312.8V317.2M401 293.4V297.9M401 305.9V310.4M402.4 308.1V312.6M402.4 320.6V325.1M403.9 299.1V303.6M403.9 311.6V316.1M405.3 311.2V315.8M405.3 323.8V328.3M406.8 326V330.6M406.8 338.6V343.1M408.2 309V313.6M408.2 321.6V326.2M409.7 307.2V311.8M409.7 319.8V324.4M411.1 315.5V320.2M411.1 328.2V332.8M412.6 310V314.7M412.6 322.7V327.3M414 308.4V313.1M414 321.1V325.8M415.5 321.7V326.4M415.5 334.4V339.1M416.9 327.8V332.5M416.9 340.5V345.3M418.4 317.5V322.2M418.4 330.2V335M419.8 318V322.8M419.8 330.8V335.6M421.3 319.7V324.5M421.3 332.5V337.4M422.7 308.3V313.1M422.7 321.1V326M424.2 302V306.9M424.2 314.9V319.8M425.6 321.2V326.1M425.6 334.1V339M427.1 311.4V316.3M427.1 324.3V329.2M428.5 309.2V314.1M428.5 322.1V327.1M430 311.1V316M430 324V329M431.4 307.8V312.8M431.4 320.8V325.8M432.9 320.4V325.4M432.9 333.4V338.4M434.3 309.8V314.8M434.3 322.8V327.9M435.8 297.6V302.7M435.8 310.7V315.7M437.2 308.1V313.2M437.2 321.2V326.3M438.7 320.4V325.5M438.7 333.5V338.6M440.1 308.5V313.7M440.1 321.7V326.8M441.6 301.8V307M441.6 315V320.2M443 309.3V314.5M443 322.5V327.7M444.5 317.2V322.4M444.5 330.4V335.6M445.9 297.1V302.3M445.9 310.3V315.5M447.3 322.3V327.5M447.3 335.5V340.8M448.8 305.4V310.7M448.8 318.7V324M450.2 309.7V315M450.2 323V328.3M451.7 320.2V325.6M451.7 333.6V338.9M453.1 297.2V302.6M453.1 310.6V316M454.6 305.1V310.5M454.6 318.5V323.9M456 319.1V324.5M456 332.5V338M457.5 302.3V307.7M457.5 315.7V321.2M458.9 312V317.5M458.9 325.5V331M460.4 326.1V331.6M460.4 339.6V345.1M461.8 314.7V320.2M461.8 328.2V333.7M463.3 305.8V311.4M463.3 319.4V324.9M464.7 302.5V308.1M464.7 316.1V321.7M466.2 307.4V313M466.2 321V326.6M467.6 308.9V314.5M467.6 322.5V328.2M469.1 305.3V310.9M469.1 318.9V324.6M470.5 312.3V318M470.5 326V331.7M472 299.4V305.1M472 313.1V318.8M473.4 309.9V315.6M473.4 323.6V329.3M474.9 308.9V314.7M474.9 322.7V328.5M476.3 307V312.8M476.3 320.8V326.6M477.8 323.2V329M477.8 337V342.8M479.2 320.2V326M479.2 334V339.9M480.7 298.5V304.4M480.7 312.4V318.3M482.1 310.6V316.5M482.1 324.5V330.4M483.6 317V323M483.6 331V336.9M485 311V317M485 325V330.9M486.5 319.4V325.4M486.5 333.4V339.4M487.9 311.9V317.9M487.9 325.9V331.9M489.4 321.3V327.4M489.4 335.4V341.4M490.8 311.8V317.9M490.8 325.9V331.9M492.3 330.4V336.5M492.3 344.5V350.6M493.7 300.8V306.9M493.7 314.9V321M495.1 319.2V325.3M495.1 333.3V339.5M496.6 329.8V335.9M496.6 343.9V350.1M498 315.6V321.8M498 329.8V336M499.5 316.7V323M499.5 331V337.2M500.9 310.9V317.2M500.9 325.2V331.5M502.4 323.8V330.1M502.4 338.1V344.4M503.8 307.5V313.8M503.8 321.8V328.1M505.3 289.4V295.8M505.3 303.8V310.1M506.7 324V330.4M506.7 338.4V344.7M508.2 306.8V313.2M508.2 321.2V327.6M509.6 313.2V319.6M509.6 327.6V334M511.1 307.5V314M511.1 322V328.5M512.5 328.3V334.7M512.5 342.7V349.2M514 321.1V327.6M514 335.6V342.1M515.4 303.9V310.5M515.4 318.5V325M516.9 309V315.6M516.9 323.6V330.2M518.3 291.1V297.7M518.3 305.7V312.3M519.8 315.9V322.6M519.8 330.6V337.2M521.2 306.6V313.2M521.2 321.2V327.9M522.7 286V292.7M522.7 300.7V307.4M524.1 316.8V323.5M524.1 331.5V338.2M525.6 318.4V325.2M525.6 333.2V339.9M527 309.3V316.1M527 324.1V330.8M528.5 309.6V316.4M528.5 324.4V331.2M529.9 300.2V307.1M529.9 315.1V321.9M531.4 308.2V315.1M531.4 323.1V330M532.8 318.2V325.1M532.8 333.1V340M534.3 307.9V314.8M534.3 322.8V329.8M535.7 287.5V294.4M535.7 302.4V309.4M537.2 296.8V303.8M537.2 311.8V318.8M538.6 334.2V341.2M538.6 349.2V356.3M540.1 312.9V319.9M540.1 327.9V335M541.5 321.2V328.3M541.5 336.3V343.4M542.9 304.8V311.9M542.9 319.9V327M544.4 313.8V320.9M544.4 328.9V336.1" fill="none" stroke="#f00" stroke-width="1" shape-rendering="crispEdges"/><path d="M62.4 489.2h8v8h-8zM63.8 469.4h8v8h-8zM65.3 454.9h8v8h-8zM66.7 446.6h8v8h-8zM68.2 428.8h8v8h-8zM69.6 412.5h8v8h-8zM71.1 389.9h8v8h-8zM72.5 375h8v8h-8zM74 353.8h8v8h-8zM75.4 348.6h8v8h-8zM76.9 316.3h8v8h-8zM78.3 308.1h8v8h-8zM79.8 289.6h8v8h-8zM81.2 279.6h8v8h-8zM82.7 268.2h8v8h-8zM84.1 253h8v8h-8zM85.6 241.4h8v8h-8zM87 237.8h8v8h-8zM88.5 230.6h8v8h-8zM89.9 221.2h8v8h-8zM91.4 224.7h8v8h-8zM92.8 225.4h8v8h-8zM94.3 215.3h8v8h-8zM95.7 220.9h8v8h-8zM97.2 228.6h8v8h-8zM98.6 226.2h8v8h-8zM100.1 228.5h8v8h-8zM101.5 237h8v8h-8zM103 244.3h8v8h-8zM104.4 243.5h8v8h-8zM105.9 246.4h8v8h-8zM107.3 259.5h8v8h-8zM108.7 269.9h8v8h-8zM110.2 272.4h8v8h-8zM111.6 278.8h8v8h-8zM113.1 291.8h8v8h-8zM114.5 295.4h8v8h-8zM116 300.4h8v8h-8zM117.4 313.7h8v8h-8zM118.9 323.3h8v8h-8zM120.3 323.6h8v8h-8zM121.8 329.5h8v8h-8zM123.2 330.1h8v8h-8zM124.7 346.2h8v8h-8zM126.1 346.6h8v8h-8zM127.6 350.3h8v8h-8zM129 357h8v8h-8zM130.5 349h8v8h-8zM131.9 347.8h8v8h-8zM133.4 354.6h8v8h-8zM134.8 343.5h8v8h-8zM136.3 345.7h8v8h-8zM137.7 345.7h8v8h-8zM139.2 345.4h8v8h-8zM140.6 340.8h8v8h-8zM142.1 350.9h8v8h-8zM143.5 338.7h8v8h-8zM145 336.6h8v8h-8zM146.4 346.9h8v8h-8zM147.9 333.7h8v8h-8zM149.3 334.7h8v8h-8zM150.8 327.3h8v8h-8zM152.2 331.9h8v8h-8zM153.7 328h8v8h-8zM155.1 324.6h8v8h-8zM156.5 329.8h8v8h-8zM158 320.7h8v8h-8zM159.4 323.5h8v8h-8zM160.9 319.5h8v8h-8zM162.3 324.4h8v8h-8zM163.8 315.1h8v8h-8zM165.2 317.4h8v8h-8zM166.7 321.3h8v8h-8zM168.1 316.6h8v8h-8zM169.6 313h8v8h-8zM171 309.8h8v8h-8zM172.5 328.1h8v8h-8zM173.9 314.2h8v8h-8zM175.4 316.2h8v8h-8zM176.8 318.8h8v8h-8zM178.3 323.4h8v8h-8zM179.7 310h8v8h-8zM181.2 323.4h8v8h-8zM182.6 312.2h8v8h-8zM184.1 307h8v8h-8zM185.5 322.4h8v8h-8zM187 313.8h8v8h-8zM188.4 318.3h8v8h-8zM189.9 308.2h8v8h-8zM191.3 299.6h8v8h-8zM192.8 295.4h8v8h-8zM194.2 316h8v8h-8zM195.7 307.9h8v8h-8zM197.1 299.5h8v8h-8zM198.6 293.5h8v8h-8zM200 299.5h8v8h-8zM201.5 305.8h8v8h-8zM202.9 299.4h8v8h-8zM204.3 301.1h8v8h-8zM205.8 302.4h8v8h-8zM207.2 306h8v8h-8zM208.7 300h8v8h-8zM210.1 301.4h8v8h-8zM211.6 305h8v8h-8zM213 307.2h8v8h-8zM214.5 315.2h8v8h-8zM215.9 312.3h8v8h-8zM217.4 304.1h8v8h-8zM218.8 314.7h8v8h-8zM220.3 324.5h8v8h-8zM221.7 309.9h8v8h-8zM223.2 317.1h8v8h-8zM224.6 309.8h8v8h-8zM226.1 324.4h8v8h-8zM227.5 329.7h8v8h-8zM229 337.7h8v8h-8zM230.4 322.4h8v8h-8zM231.9 319.1h8v8h-8zM233.3 338.4h8v8h-8zM234.8 338.4h8v8h-8zM236.2 331.3h8v8h-8zM237.7 340.6h8v8h-8zM239.1 337.2h8v8h-8zM240.6 337.4h8v8h-8zM242 333.4h8v8h-8zM243.5 326.8h8v8h-8zM244.9 332.5h8v8h-8zM246.4 325.4h8v8h-8zM247.8 332.3h8v8h-8zM249.3 325.6h8v8h-8zM250.7 339.2h8v8h-8zM252.1 333h8v8h-8zM253.6 316.3h8v8h-8zM255 323h8v8h-8zM256.5 313.2h8v8h-8zM257.9 311.2h8v8h-8zM259.4 304h8v8h-8zM260.8 305.4h8v8h-8zM262.3 302.2h8v8h-8zM263.7 308.1h8v8h-8zM265.2 310.6h8v8h-8zM266.6 309.7h8v8h-8zM268.1 307.2h8v8h-8zM269.5 311h8v8h-8zM271 306.8h8v8h-8zM272.4 303.8h8v8h-8zM273.9 301.8h8v8h-8zM275.3 306.3h8v8h-8zM276.8 317.8h8v8h-8zM278.2 306.4h8v8h-8zM279.7 305.6h8v8h-8zM281.1 301.2h8v8h-8zM282.6 306.2h8v8h-8zM284 316.3h8v8h-8zM285.5 318.6h8v8h-8zM286.9 301.6h8v8h-8zM288.4 312h8v8h-8zM289.8 306.3h8v8h-8zM291.3 306.1h8v8h-8zM292.7 327.9h8v8h-8zM294.2 320.9h8v8h-8zM295.6 321.6h8v8h-8zM297.1 321.9h8v8h-8zM298.5 322.9h8v8h-8zM299.9 325.9h8v8h-8zM301.4 326.5h8v8h-8zM302.8 338.5h8v8h-8zM304.3 328.9h8v8h-8zM305.7 332.8h8v8h-8zM307.2 326h8v8h-8zM308.6 329.6h8v8h-8zM310.1 320.9h8v8h-8zM311.5 318.4h8v8h-8zM313 320.9h8v8h-8zM314.4 319.6h8v8h-8zM315.9 319.9h8v8h-8zM317.3 322.4h8v8h-8zM318.8 319h8v8h-8zM320.2 320.1h8v8h-8zM321.7 312.3h8v8h-8zM323.1 313.9h8v8h-8zM324.6 308.6h8v8h-8zM326 321.8h8v8h-8zM327.5 304.5h8v8h-8zM328.9 316.2h8v8h-8zM330.4 315.5h8v8h-8zM331.8 311.2h8v8h-8zM333.3 313.9h8v8h-8zM334.7 307.6h8v8h-8zM336.2 314.4h8v8h-8zM337.6 318.6h8v8h-8zM339.1 317.5h8v8h-8zM340.5 301.8h8v8h-8zM342 312.3h8v8h-8zM343.4 322.6h8v8h-8zM344.9 314.6h8v8h-8zM346.3 327.7h8v8h-8zM347.7 303h8v8h-8zM349.2 329.8h8v8h-8zM350.6 315.3h8v8h-8zM352.1 315.8h8v8h-8zM353.5 332.3h8v8h-8zM355 319.5h8v8h-8zM356.4 314.7h8v8h-8zM357.9 319.5h8v8h-8zM359.3 321.6h8v8h-8zM360.8 316.4h8v8h-8zM362.2 322.8h8v8h-8zM363.7 321.5h8v8h-8zM365.1 325h8v8h-8zM366.6 318.6h8v8h-8zM368 330.8h8v8h-8zM369.5 316.3h8v8h-8zM370.9 326.1h8v8h-8zM372.4 330.1h8v8h-8zM373.8 317.5h8v8h-8zM375.3 305.8h8v8h-8zM376.7 310.8h8v8h-8zM378.2 321.9h8v8h-8zM379.6 311h8v8h-8zM381.1 319.6h8v8h-8zM382.5 316h8v8h-8zM384 313.4h8v8h-8zM385.4 330.9h8v8h-8zM386.9 311.3h8v8h-8zM388.3 321h8v8h-8zM389.8 317.8h8v8h-8zM391.2 324.1h8v8h-8zM392.7 324.4h8v8h-8zM394.1 319.6h8v8h-8zM395.5 304.8h8v8h-8zM397 297.9h8v8h-8zM398.4 312.6h8v8h-8zM399.9 303.6h8v8h-8zM401.3 315.8h8v8h-8zM402.8 330.6h8v8h-8zM404.2 313.6h8v8h-8zM405.7 311.8h8v8h-8zM407.1 320.2h8v8h-8zM408.6 314.7h8v8h-8zM410 313.1h8v8h-8zM411.5 326.4h8v8h-8zM412.9 332.5h8v8h-8zM414.4 322.2h8v8h-8zM415.8 322.8h8v8h-8zM417.3 324.5h8v8h-8zM418.7 313.1h8v8h-8zM420.2 306.9h8v8h-8zM421.6 326.1h8v8h-8zM423.1 316.3h8v8h-8zM424.5 314.1h8v8h-8zM426 316h8v8h-8zM427.4 312.8h8v8h-8zM428.9 325.4h8v8h-8zM430.3 314.8h8v8h-8zM431.8 302.7h8v8h-8zM433.2 313.2h8v8h-8zM434.7 325.5h8v8h-8zM436.1 313.7h8v8h-8zM437.6 307h8v8h-8zM439 314.5h8v8h-8zM440.5 322.4h8v8h-8zM441.9 302.3h8v8h-8zM443.3 327.5h8v8h-8zM444.8 310.7h8v8h-8zM446.2 315h8v8h-8zM447.7 325.6h8v8h-8zM449.1 302.6h8v8h-8zM450.6 310.5h8v8h-8zM452 324.5h8v8h-8zM453.5 307.7h8v8h-8zM454.9 317.5h8v8h-8zM456.4 331.6h8v8h-8zM457.8 320.2h8v8h-8zM459.3 311.4h8v8h-8zM460.7 308.1h8v8h-8zM462.2 313h8v8h-8zM463.6 314.5h8v8h-8zM465.1 310.9h8v8h-8zM466.5 318h8v8h-8zM468 305.1h8v8h-8zM469.4 315.6h8v8h-8zM470.9 314.7h8v8h-8zM472.3 312.8h8v8h-8zM473.8 329h8v8h-8zM475.2 326h8v8h-8zM476.7 304.4h8v8h-8zM478.1 316.5h8v8h-8zM479.6 323h8v8h-8zM481 317h8v8h-8zM482.5 325.4h8v8h-8zM483.9 317.9h8v8h-8zM485.4 327.4h8v8h-8zM486.8 317.9h8v8h-8zM488.3 336.5h8v8h-8zM489.7 306.9h8v8h-8zM491.1 325.3h8v8h-8zM492.6 335.9h8v8h-8zM494 321.8h8v8h-8zM495.5 323h8v8h-8zM496.9 317.2h8v8h-8zM498.4 330.1h8v8h-8zM499.8 313.8h8v8h-8zM501.3 295.8h8v8h-8zM502.7 330.4h8v8h-8zM504.2 313.2h8v8h-8zM505.6 319.6h8v8h-8zM507.1 314h8v8h-8zM508.5 334.7h8v8h-8zM510 327.6h8v8h-8zM511.4 310.5h8v8h-8zM512.9 315.6h8v8h-8zM514.3 297.7h8v8h-8zM515.8 322.6h8v8h-8zM517.2 313.2h8v8h-8zM518.7 292.7h8v8h-8zM520.1 323.5h8v8h-8zM521.6 325.2h8v8h-8zM523 316.1h8v8h-8zM524.5 316.4h8v8h-8zM525.9 307.1h8v8h-8zM527.4 315.1h8v8h-8zM528.8 325.1h8v8h-8zM530.3 314.8h8v8h-8zM531.7 294.4h8v8h-8zM533.2 303.8h8v8h-8zM534.6 341.2h8v8h-8zM536.1 319.9h8v8h-8zM537.5 328.3h8v8h-8zM538.9 311.9h8v8h-8zM540.4 320.9h8v8h-8z" fill="none" stroke="#f00" stroke-width="1" shape-rendering="crispEdges"/><polyline points="65,136 65.6,140.8 66.2,145.8 66.8,151.1 67.4,156.7 68,162.4 68.6,168.4 69.2,174.6 69.8,181 70.4,187.5 71,194.2 71.6,201 72.2,208 72.8,215 73.4,222.1 74,229.3 74.6,236.5 75.2,243.8 75.8,251 76.4,258.3 77,265.6 77.6,272.8 78.2,280 78.8,287.1 79.4,294.2 80,301.1 80.6,308 81.2,314.7 81.8,321.3 82.3,327.8 82.9,334.1 83.5,340.3 84.1,346.2 84.7,352 85.3,357.6 85.9,363 86.5,368.2 87.1,373.2 87.7,378 88.3,382.5 88.9,386.7 89.5,390.8 90.1,394.6 90.7,398.1 91.3,401.4 91.9,404.5 92.5,407.2 93.1,409.8 93.7,412 94.3,414 94.9,415.8 95.5,417.3 96.1,418.5 96.7,419.5 97.3,420.3 97.9,420.8 98.5,421 99.1,421.1 99.7,420.9 100.3,420.4 100.9,419.8 101.5,418.9 102.1,417.9 102.7,416.6 103.3,415.2 103.9,413.6 104.5,411.8 105.1,409.8 105.7,407.7 106.3,405.4 106.9,403 107.5,400.5 108.1,397.8 108.7,395.1 109.3,392.2 109.9,389.3 110.5,386.3 111.1,383.2 111.7,380 112.3,376.8 112.9,373.6 113.5,370.3 114.1,367 114.7,363.7 115.3,360.4 115.9,357.1 116.4,353.8 117,350.5 117.6,347.3 118.2,344.1 118.8,340.9 119.4,337.8 120,334.8 120.6,331.8 121.2,328.9 121.8,326 122.4,323.3 123,320.6 123.6,318 124.2,315.6 124.8,313.2 125.4,310.9 126,308.7 126.6,306.7 127.2,304.7 127.8,302.9 128.4,301.1 129,299.5 129.6,298 130.2,296.6 130.8,295.4 131.4,294.2 132,293.2 132.6,292.2 133.2,291.4 133.8,290.7 134.4,290.1 135,289.6 135.6,289.2 136.2,288.9 136.8,288.7 137.4,288.6 138,288.6 138.6,288.6 139.2,288.8 139.8,289 140.4,289.3 141,289.7 141.6,290.1 142.2,290.6 142.8,291.2 143.4,291.7 144,292.4 144.6,293.1 145.2,293.8 145.8,294.6 146.4,295.4 147,296.2 147.6,297 148.2,297.8 148.8,298.7 149.4,299.6 150,300.5 150.5,301.3 151.1,302.2 151.7,303.1 152.3,303.9 152.9,304.8 153.5,305.6 154.1,306.4 154.7,307.2 155.3,308 155.9,308.7 156.5,309.5 157.1,310.2 157.7,310.8 158.3,311.5 158.9,312.1 159.5,312.7 160.1,313.2 160.7,313.8 161.3,314.2 161.9,314.7 162.5,315.1 163.1,315.5 163.7,315.9 164.3,316.2 164.9,316.5 165.5,316.8 166.1,317.1 166.7,317.3 167.3,317.5 167.9,317.7 168.5,317.9 169.1,318.1 169.7,318.2 170.3,318.3 170.9,318.4 171.5,318.6 172.1,318.7 172.7,318.7 173.3,318.8 173.9,318.9 174.5,319 175.1,319.1 175.7,319.2 176.3,319.3 176.9,319.4 177.5,319.5 178.1,319.6 178.7,319.8 179.3,319.9 179.9,320.1 180.5,320.3 181.1,320.5 181.7,320.7 182.3,321 182.9,321.2 183.5,321.5 184.1,321.8 184.6,322.1 185.2,322.4 185.8,322.8 186.4,323.2 187,323.6 187.6,324 188.2,324.4 188.8,324.9 189.4,325.3 190,325.8 190.6,326.3 191.2,326.8 191.8,327.3 192.4,327.8 193,328.4 193.6,328.9 194.2,329.5 194.8,330 195.4,330.5 196,331.1 196.6,331.6 197.2,332.1 197.8,332.7 198.4,333.2 199,333.7 199.6,334.1 200.2,334.6 200.8,335 201.4,335.5 202,335.9 202.6,336.2 203.2,336.6 203.8,336.9 204.4,337.1 205,337.4 205.6,337.6 206.2,337.8 206.8,337.9 207.4,338 208,338 208.6,338 209.2,338 209.8,337.9 210.4,337.8 211,337.6 211.6,337.4 212.2,337.2 212.8,336.9 213.4,336.5 214,336.1 214.6,335.7 215.2,335.2 215.8,334.7 216.4,334.1 217,333.5 217.6,332.9 218.2,332.2 218.7,331.5 219.3,330.8 219.9,330 220.5,329.2 221.1,328.4 221.7,327.5 222.3,326.7 222.9,325.8 223.5,324.9 224.1,323.9 224.7,323 225.3,322.1 225.9,321.1 226.5,320.2 227.1,319.2 227.7,318.3 228.3,317.3 228.9,316.4 229.5,315.5 230.1,314.6 230.7,313.7 231.3,312.8 231.9,312 232.5,311.2 233.1,310.4 233.7,309.6 234.3,308.9 234.9,308.2 235.5,307.6 236.1,307 236.7,306.4 237.3,305.9 237.9,305.5 238.5,305 239.1,304.7 239.7,304.3 240.3,304.1 240.9,303.9 241.5,303.7 242.1,303.6 242.7,303.5 243.3,303.5 243.9,303.6 244.5,303.7 245.1,303.9 245.7,304.1 246.3,304.4 246.9,304.7 247.5,305.1 248.1,305.5 248.7,305.9 249.3,306.5 249.9,307 250.5,307.6 251.1,308.2 251.7,308.9 252.3,309.6 252.8,310.4 253.4,311.2 254,312 254.6,312.8 255.2,313.6 255.8,314.5 256.4,315.4 257,316.3 257.6,317.2 258.2,318.1 258.8,319.1 259.4,320 260,320.9 260.6,321.8 261.2,322.7 261.8,323.6 262.4,324.5 263,325.4 263.6,326.2 264.2,327.1 264.8,327.9 265.4,328.7 266,329.4 266.6,330.1 267.2,330.8 267.8,331.4 268.4,332 269,332.6 269.6,333.1 270.2,333.6 270.8,334.1 271.4,334.4 272,334.8 272.6,335.1 273.2,335.3 273.8,335.5 274.4,335.7 275,335.8 275.6,335.8 276.2,335.8 276.8,335.8 277.4,335.7 278,335.5 278.6,335.4 279.2,335.1 279.8,334.8 280.4,334.5 281,334.2 281.6,333.8 282.2,333.3 282.8,332.8 283.4,332.3 284,331.8 284.6,331.2 285.2,330.6 285.8,330 286.4,329.3 286.9,328.7 287.5,328 288.1,327.3 288.7,326.5 289.3,325.8 289.9,325.1 290.5,324.4 291.1,323.6 291.7,322.9 292.3,322.1 292.9,321.4 293.5,320.7 294.1,320 294.7,319.3 295.3,318.6 295.9,317.9 296.5,317.3 297.1,316.7 297.7,316.1 298.3,315.5 298.9,315 299.5,314.5 300.1,314 300.7,313.6 301.3,313.2 301.9,312.8 302.5,312.5 303.1,312.2 303.7,311.9 304.3,311.7 304.9,311.5 305.5,311.4 306.1,311.3 306.7,311.2 307.3,311.2 307.9,311.2 308.5,311.3 309.1,311.4 309.7,311.5 310.3,311.7 310.9,311.9 311.5,312.1 312.1,312.4 312.7,312.7 313.3,313 313.9,313.4 314.5,313.8 315.1,314.2 315.7,314.6 316.3,315.1 316.9,315.6 317.5,316.1 318.1,316.6 318.7,317.1 319.3,317.7 319.9,318.2 320.5,318.8 321.1,319.3 321.6,319.9 322.2,320.5 322.8,321 323.4,321.6 324,322.1 324.6,322.7 325.2,323.2 325.8,323.7 326.4,324.2 327,324.7 327.6,325.2 328.2,325.7 328.8,326.1 329.4,326.5 330,326.9 330.6,327.3 331.2,327.6 331.8,327.9 332.4,328.2 333,328.4 333.6,328.6 334.2,328.8 334.8,329 335.4,329.1 336,329.2 336.6,329.3 337.2,329.3 337.8,329.3 338.4,329.3 339,329.2 339.6,329.1 340.2,329 340.8,328.8 341.4,328.7 342,328.5 342.6,328.2 343.2,328 343.8,327.7 344.4,327.4 345,327 345.6,326.7 346.2,326.3 346.8,325.9 347.4,325.5 348,325.1 348.6,324.7 349.2,324.3 349.8,323.8 350.4,323.4 351,322.9 351.6,322.5 352.2,322 352.8,321.6 353.4,321.1 354,320.7 354.6,320.2 355.2,319.8 355.7,319.4 356.3,319 356.9,318.6 357.5,318.2 358.1,317.8 358.7,317.5 359.3,317.1 359.9,316.8 360.5,316.5 361.1,316.2 361.7,316 362.3,315.8 362.9,315.6 363.5,315.4 364.1,315.2 364.7,315.1 365.3,315 365.9,314.9 366.5,314.9 367.1,314.9 367.7,314.9 368.3,314.9 368.9,315 369.5,315 370.1,315.1 370.7,315.3 371.3,315.4 371.9,315.6 372.5,315.8 373.1,316 373.7,316.3 374.3,316.5 374.9,316.8 375.5,317.1 376.1,317.4 376.7,317.7 377.3,318.1 377.9,318.4 378.5,318.8 379.1,319.2 379.7,319.5 380.3,319.9 380.9,320.3 381.5,320.7 382.1,321.1 382.7,321.5 383.3,321.9 383.9,322.3 384.5,322.6 385.1,323 385.7,323.4 386.3,323.7 386.9,324.1 387.5,324.4 388.1,324.7 388.7,325 389.3,325.3 389.8,325.6 390.4,325.9 391,326.1 391.6,326.3 392.2,326.5 392.8,326.7 393.4,326.9 394,327 394.6,327.1 395.2,327.2 395.8,327.3 396.4,327.4 397,327.4 397.6,327.4 398.2,327.4 398.8,327.3 399.4,327.3 400,327.2 400.6,327.1 401.2,327 401.8,326.8 402.4,326.7 403,326.5 403.6,326.3 404.2,326.1 404.8,325.8 405.4,325.6 406,325.3 406.6,325 407.2,324.8 407.8,324.5 408.4,324.2 409,323.8 409.6,323.5 410.2,323.2 410.8,322.9 411.4,322.5 412,322.2 412.6,321.9 413.2,321.5 413.8,321.2 414.4,320.9 415,320.5 415.6,320.2 416.2,319.9 416.8,319.6 417.4,319.3 418,319 418.6,318.7 419.2,318.5 419.8,318.2 420.4,318 421,317.8 421.6,317.6 422.2,317.4 422.8,317.2 423.4,317 423.9,316.9 424.5,316.8 425.1,316.7 425.7,316.6 426.3,316.5 426.9,316.5 427.5,316.5 428.1,316.5 428.7,316.5 429.3,316.5 429.9,316.6 430.5,316.6 431.1,316.7 431.7,316.8 432.3,316.9 432.9,317.1 433.5,317.2 434.1,317.4 434.7,317.6 435.3,317.7 435.9,317.9 436.5,318.2 437.1,318.4 437.7,318.6 438.3,318.9 438.9,319.1 439.5,319.4 440.1,319.7 440.7,319.9 441.3,320.2 441.9,320.5 442.5,320.8 443.1,321 443.7,321.3 444.3,321.6 444.9,321.9 445.5,322.1 446.1,322.4 446.7,322.7 447.3,322.9 447.9,323.2 448.5,323.4 449.1,323.6 449.7,323.9 450.3,324.1 450.9,324.3 451.5,324.4 452.1,324.6 452.7,324.8 453.3,324.9 453.9,325.1 454.5,325.2 455.1,325.3 455.7,325.4 456.3,325.4 456.9,325.5 457.5,325.5 458,325.6 458.6,325.6 459.2,325.6 459.8,325.6 460.4,325.5 461,325.5 461.6,325.4 462.2,325.3 462.8,325.2 463.4,325.1 464,325 464.6,324.9 465.2,324.8 465.8,324.6 466.4,324.4 467,324.3 467.6,324.1 468.2,323.9 468.8,323.7 469.4,323.5 470,323.3 470.6,323.1 471.2,322.9 471.8,322.7 472.4,322.4 473,322.2 473.6,322 474.2,321.8 474.8,321.5 475.4,321.3 476,321.1 476.6,320.9 477.2,320.7 477.8,320.5 478.4,320.3 479,320.1 479.6,319.9 480.2,319.7 480.8,319.6 481.4,319.4 482,319.3 482.6,319.1 483.2,319 483.8,318.9 484.4,318.8 485,318.7 485.6,318.6 486.2,318.5 486.8,318.4 487.4,318.4 488,318.4 488.6,318.3 489.2,318.3 489.8,318.3 490.4,318.3 491,318.4 491.6,318.4 492.1,318.4 492.7,318.5 493.3,318.6 493.9,318.6 494.5,318.7 495.1,318.8 495.7,318.9 496.3,319.1 496.9,319.2 497.5,319.3 498.1,319.4 498.7,319.6 499.3,319.7 499.9,319.9 500.5,320.1 501.1,320.2 501.7,320.4 502.3,320.6 502.9,320.7 503.5,320.9 504.1,321.1 504.7,321.2 505.3,321.4 505.9,321.6 506.5,321.8 507.1,321.9 507.7,322.1 508.3,322.2 508.9,322.4 509.5,322.5 510.1,322.7 510.7,322.8 511.3,323 511.9,323.1 512.5,323.2 513.1,323.3 513.7,323.4 514.3,323.5 514.9,323.6 515.5,323.7 516.1,323.7 516.7,323.8 517.3,323.8 517.9,323.9 518.5,323.9 519.1,323.9 519.7,323.9 520.3,323.9 520.9,323.9 521.5,323.9 522.1,323.9 522.7,323.8 523.3,323.8 523.9,323.8 524.5,323.7 525.1,323.6 525.7,323.5 526.2,323.5 526.8,323.4 527.4,323.3 528,323.2 528.6,323.1 529.2,323 529.8,322.8 530.4,322.7 531,322.6 531.6,322.5 532.2,322.4 532.8,322.2 533.4,322.1 534,322 534.6,321.8 535.2,321.7 535.8,321.6 536.4,321.4 537,321.3 537.6,321.2 538.2,321.1 538.8,320.9 539.4,320.8 540,320.7 540.6,320.6 541.2,320.5 541.8,320.4 542.4,320.3 543,320.2" fill="none" stroke="#000" stroke-width="1.6" shape-rendering="crispEdges"/><polyline points="65,505.3 65.6,500.4 66.2,495.2 66.8,489.7 67.4,484 68,478 68.6,471.9 69.2,465.6 69.8,459.1 70.4,452.4 71,445.6 71.6,438.7 72.2,431.6 72.8,424.5 73.4,417.3 74,410.1 74.6,402.8 75.2,395.5 75.8,388.2 76.4,380.8 77,373.6 77.6,366.3 78.2,359.1 78.8,352 79.4,345 80,338 80.6,331.2 81.2,324.5 81.8,317.9 82.3,311.5 82.9,305.2 83.5,299.1 84.1,293.2 84.7,287.5 85.3,282 85.9,276.7 86.5,271.6 87.1,266.7 87.7,262 88.3,257.6 88.9,253.5 89.5,249.5 90.1,245.9 90.7,242.4 91.3,239.3 91.9,236.3 92.5,233.7 93.1,231.3 93.7,229.2 94.3,227.3 94.9,225.7 95.5,224.3 96.1,223.2 96.7,222.3 97.3,221.7 97.9,221.3 98.5,221.2 99.1,221.3 99.7,221.6 100.3,222.2 100.9,223 101.5,223.9 102.1,225.1 102.7,226.5 103.3,228 103.9,229.8 104.5,231.7 105.1,233.7 105.7,235.9 106.3,238.3 106.9,240.8 107.5,243.4 108.1,246.1 108.7,248.9 109.3,251.9 109.9,254.9 110.5,258 111.1,261.1 111.7,264.3 112.3,267.6 112.9,270.8 113.5,274.1 114.1,277.5 114.7,280.8 115.3,284.1 115.9,287.5 116.4,290.8 117,294.1 117.6,297.3 118.2,300.5 118.8,303.7 119.4,306.8 120,309.8 120.6,312.8 121.2,315.7 121.8,318.5 122.4,321.2 123,323.9 123.6,326.4 124.2,328.9 124.8,331.2 125.4,333.5 126,335.6 126.6,337.6 127.2,339.5 127.8,341.3 128.4,343 129,344.6 129.6,346 130.2,347.4 130.8,348.6 131.4,349.7 132,350.7 132.6,351.6 133.2,352.4 133.8,353 134.4,353.6 135,354 135.6,354.4 136.2,354.6 136.8,354.8 137.4,354.8 138,354.8 138.6,354.7 139.2,354.5 139.8,354.2 140.4,353.9 141,353.5 141.6,353 142.2,352.5 142.8,351.9 143.4,351.3 144,350.6 144.6,349.9 145.2,349.1 145.8,348.3 146.4,347.5 147,346.7 147.6,345.8 148.2,345 148.8,344.1 149.4,343.2 150,342.3 150.5,341.4 151.1,340.5 151.7,339.7 152.3,338.8 152.9,337.9 153.5,337.1 154.1,336.3 154.7,335.5 155.3,334.7 155.9,333.9 156.5,333.2 157.1,332.5 157.7,331.8 158.3,331.2 158.9,330.6 159.5,330 160.1,329.5 160.7,328.9 161.3,328.5 161.9,328 162.5,327.6 163.1,327.2 163.7,326.8 164.3,326.5 164.9,326.2 165.5,325.9 166.1,325.6 166.7,325.4 167.3,325.2 167.9,325 168.5,324.8 169.1,324.7 169.7,324.6 170.3,324.4 170.9,324.3 171.5,324.2 172.1,324.1 172.7,324 173.3,323.9 173.9,323.8 174.5,323.8 175.1,323.7 175.7,323.6 176.3,323.5 176.9,323.4 177.5,323.2 178.1,323.1 178.7,323 179.3,322.8 179.9,322.6 180.5,322.4 181.1,322.2 181.7,322 182.3,321.8 182.9,321.5 183.5,321.2 184.1,320.9 184.6,320.6 185.2,320.3 185.8,319.9 186.4,319.5 187,319.1 187.6,318.7 188.2,318.3 188.8,317.8 189.4,317.4 190,316.9 190.6,316.4 191.2,315.9 191.8,315.4 192.4,314.9 193,314.3 193.6,313.8 194.2,313.3 194.8,312.7 195.4,312.2 196,311.7 196.6,311.1 197.2,310.6 197.8,310.1 198.4,309.6 199,309.1 199.6,308.7 200.2,308.2 200.8,307.8 201.4,307.4 202,307 202.6,306.6 203.2,306.3 203.8,306 204.4,305.8 205,305.6 205.6,305.4 206.2,305.2 206.8,305.1 207.4,305 208,305 208.6,305 209.2,305.1 209.8,305.2 210.4,305.3 211,305.5 211.6,305.7 212.2,306 212.8,306.3 213.4,306.7 214,307.1 214.6,307.6 215.2,308.1 215.8,308.6 216.4,309.2 217,309.8 217.6,310.5 218.2,311.1 218.7,311.9 219.3,312.6 219.9,313.4 220.5,314.2 221.1,315.1 221.7,315.9 222.3,316.8 222.9,317.7 223.5,318.6 224.1,319.5 224.7,320.5 225.3,321.4 225.9,322.4 226.5,323.3 227.1,324.3 227.7,325.2 228.3,326.1 228.9,327.1 229.5,328 230.1,328.9 230.7,329.7 231.3,330.6 231.9,331.4 232.5,332.2 233.1,333 233.7,333.7 234.3,334.4 234.9,335.1 235.5,335.7 236.1,336.3 236.7,336.8 237.3,337.3 237.9,337.8 238.5,338.2 239.1,338.5 239.7,338.8 240.3,339 240.9,339.2 241.5,339.4 242.1,339.4 242.7,339.5 243.3,339.4 243.9,339.4 244.5,339.2 245.1,339 245.7,338.8 246.3,338.5 246.9,338.2 247.5,337.8 248.1,337.3 248.7,336.8 249.3,336.3 249.9,335.7 250.5,335.1 251.1,334.5 251.7,333.8 252.3,333 252.8,332.3 253.4,331.5 254,330.7 254.6,329.8 255.2,329 255.8,328.1 256.4,327.2 257,326.3 257.6,325.4 258.2,324.4 258.8,323.5 259.4,322.6 260,321.7 260.6,320.7 261.2,319.8 261.8,318.9 262.4,318.1 263,317.2 263.6,316.4 264.2,315.5 264.8,314.7 265.4,314 266,313.2 266.6,312.5 267.2,311.9 267.8,311.3 268.4,310.7 269,310.1 269.6,309.6 270.2,309.2 270.8,308.7 271.4,308.4 272,308 272.6,307.8 273.2,307.5 273.8,307.4 274.4,307.2 275,307.2 275.6,307.1 276.2,307.1 276.8,307.2 277.4,307.3 278,307.5 278.6,307.7 279.2,308 279.8,308.3 280.4,308.6 281,309 281.6,309.4 282.2,309.9 282.8,310.4 283.4,310.9 284,311.4 284.6,312 285.2,312.6 285.8,313.3 286.4,313.9 286.9,314.6 287.5,315.3 288.1,316 288.7,316.8 289.3,317.5 289.9,318.2 290.5,319 291.1,319.7 291.7,320.4 292.3,321.2 292.9,321.9 293.5,322.6 294.1,323.3 294.7,324 295.3,324.7 295.9,325.3 296.5,326 297.1,326.6 297.7,327.2 298.3,327.7 298.9,328.2 299.5,328.7 300.1,329.2 300.7,329.6 301.3,330 301.9,330.4 302.5,330.7 303.1,331 303.7,331.2 304.3,331.4 304.9,331.6 305.5,331.7 306.1,331.8 306.7,331.8 307.3,331.8 307.9,331.8 308.5,331.7 309.1,331.6 309.7,331.5 310.3,331.3 310.9,331.1 311.5,330.8 312.1,330.5 312.7,330.2 313.3,329.9 313.9,329.5 314.5,329.1 315.1,328.6 315.7,328.2 316.3,327.7 316.9,327.2 317.5,326.7 318.1,326.2 318.7,325.7 319.3,325.1 319.9,324.6 320.5,324 321.1,323.4 321.6,322.9 322.2,322.3 322.8,321.7 323.4,321.2 324,320.6 324.6,320.1 325.2,319.6 325.8,319 326.4,318.5 327,318.1 327.6,317.6 328.2,317.1 328.8,316.7 329.4,316.3 330,315.9 330.6,315.6 331.2,315.3 331.8,315 332.4,314.7 333,314.5 333.6,314.3 334.2,314.1 334.8,313.9 335.4,313.8 336,313.7 336.6,313.7 337.2,313.7 337.8,313.7 338.4,313.7 339,313.8 339.6,313.9 340.2,314.1 340.8,314.2 341.4,314.4 342,314.6 342.6,314.9 343.2,315.1 343.8,315.4 344.4,315.8 345,316.1 345.6,316.4 346.2,316.8 346.8,317.2 347.4,317.6 348,318 348.6,318.5 349.2,318.9 349.8,319.3 350.4,319.8 351,320.2 351.6,320.7 352.2,321.2 352.8,321.6 353.4,322.1 354,322.5 354.6,322.9 355.2,323.4 355.7,323.8 356.3,324.2 356.9,324.6 357.5,325 358.1,325.3 358.7,325.7 359.3,326 359.9,326.3 360.5,326.6 361.1,326.9 361.7,327.1 362.3,327.3 362.9,327.5 363.5,327.7 364.1,327.8 364.7,327.9 365.3,328 365.9,328.1 366.5,328.1 367.1,328.1 367.7,328.1 368.3,328.1 368.9,328 369.5,327.9 370.1,327.8 370.7,327.7 371.3,327.5 371.9,327.3 372.5,327.1 373.1,326.9 373.7,326.6 374.3,326.4 374.9,326.1 375.5,325.8 376.1,325.4 376.7,325.1 377.3,324.8 377.9,324.4 378.5,324 379.1,323.7 379.7,323.3 380.3,322.9 380.9,322.5 381.5,322.1 382.1,321.7 382.7,321.4 383.3,321 383.9,320.6 384.5,320.2 385.1,319.8 385.7,319.5 386.3,319.1 386.9,318.8 387.5,318.4 388.1,318.1 388.7,317.8 389.3,317.5 389.8,317.3 390.4,317 391,316.8 391.6,316.6 392.2,316.4 392.8,316.2 393.4,316.1 394,315.9 394.6,315.8 395.2,315.7 395.8,315.7 396.4,315.6 397,315.6 397.6,315.6 398.2,315.6 398.8,315.7 399.4,315.8 400,315.8 400.6,316 401.2,316.1 401.8,316.2 402.4,316.4 403,316.6 403.6,316.8 404.2,317 404.8,317.3 405.4,317.5 406,317.8 406.6,318.1 407.2,318.4 407.8,318.7 408.4,319 409,319.3 409.6,319.6 410.2,319.9 410.8,320.3 411.4,320.6 412,320.9 412.6,321.3 413.2,321.6 413.8,322 414.4,322.3 415,322.6 415.6,322.9 416.2,323.2 416.8,323.5 417.4,323.8 418,324.1 418.6,324.4 419.2,324.6 419.8,324.9 420.4,325.1 421,325.3 421.6,325.5 422.2,325.7 422.8,325.9 423.4,326 423.9,326.2 424.5,326.3 425.1,326.4 425.7,326.4 426.3,326.5 426.9,326.5 427.5,326.5 428.1,326.5 428.7,326.5 429.3,326.5 429.9,326.4 430.5,326.4 431.1,326.3 431.7,326.2 432.3,326 432.9,325.9 433.5,325.7 434.1,325.6 434.7,325.4 435.3,325.2 435.9,325 436.5,324.7 437.1,324.5 437.7,324.3 438.3,324 438.9,323.8 439.5,323.5 440.1,323.2 440.7,323 441.3,322.7 441.9,322.4 442.5,322.1 443.1,321.8 443.7,321.6 444.3,321.3 444.9,321 445.5,320.7 446.1,320.5 446.7,320.2 447.3,320 447.9,319.7 448.5,319.5 449.1,319.3 449.7,319 450.3,318.8 450.9,318.7 451.5,318.5 452.1,318.3 452.7,318.1 453.3,318 453.9,317.9 454.5,317.8 455.1,317.7 455.7,317.6 456.3,317.5 456.9,317.5 457.5,317.4 458,317.4 458.6,317.4 459.2,317.4 459.8,317.4 460.4,317.5 461,317.5 461.6,317.6 462.2,317.7 462.8,317.8 463.4,317.9 464,318 464.6,318.2 465.2,318.3 465.8,318.5 466.4,318.6 467,318.8 467.6,319 468.2,319.2 468.8,319.4 469.4,319.6 470,319.8 470.6,320 471.2,320.2 471.8,320.4 472.4,320.7 473,320.9 473.6,321.1 474.2,321.3 474.8,321.5 475.4,321.8 476,322 476.6,322.2 477.2,322.4 477.8,322.6 478.4,322.8 479,323 479.6,323.2 480.2,323.3 480.8,323.5 481.4,323.7 482,323.8 482.6,323.9 483.2,324.1 483.8,324.2 484.4,324.3 485,324.4 485.6,324.5 486.2,324.5 486.8,324.6 487.4,324.6 488,324.7 488.6,324.7 489.2,324.7 489.8,324.7 490.4,324.7 491,324.6 491.6,324.6 492.1,324.5 492.7,324.5 493.3,324.4 493.9,324.3 494.5,324.2 495.1,324.1 495.7,324 496.3,323.9 496.9,323.8 497.5,323.6 498.1,323.5 498.7,323.4 499.3,323.2 499.9,323 500.5,322.9 501.1,322.7 501.7,322.5 502.3,322.4 502.9,322.2 503.5,322 504.1,321.9 504.7,321.7 505.3,321.5 505.9,321.3 506.5,321.2 507.1,321 507.7,320.8 508.3,320.7 508.9,320.5 509.5,320.4 510.1,320.2 510.7,320.1 511.3,320 511.9,319.9 512.5,319.7 513.1,319.6 513.7,319.5 514.3,319.5 514.9,319.4 515.5,319.3 516.1,319.2 516.7,319.2 517.3,319.1 517.9,319.1 518.5,319.1 519.1,319.1 519.7,319.1 520.3,319.1 520.9,319.1 521.5,319.1 522.1,319.1 522.7,319.2 523.3,319.2 523.9,319.3 524.5,319.3 525.1,319.4 525.7,319.5 526.2,319.6 526.8,319.7 527.4,319.8 528,319.9 528.6,320 529.2,320.1 529.8,320.2 530.4,320.3 531,320.4 531.6,320.6 532.2,320.7 532.8,320.8 533.4,321 534,321.1 534.6,321.2 535.2,321.4 535.8,321.5 536.4,321.6 537,321.7 537.6,321.9 538.2,322 538.8,322.1 539.4,322.2 540,322.3 540.6,322.5 541.2,322.6 541.8,322.7 542.4,322.7 543,322.8" fill="none" stroke="#f00" stroke-width="1.6" shape-rendering="crispEdges"/>
</g></svg>
<path d="M65 516.5h15M65 506.5h7.5M65 497.5h7.5M65 487.5h7.5M65 477.5h7.5M65 467.5h15M65 458.5h7.5M65 448.5h7.5M65 438.5h7.5M65 428.5h7.5M65 419.5h15M65 409.5h7.5M65 399.5h7.5M65 390.5h7.5M65 380.5h7.5M65 370.5h15M65 360.5h7.5M65 351.5h7.5M65 341.5h7.5M65 331.5h7.5M65 322.5h15M65 312.5h7.5M65 302.5h7.5M65 292.5h7.5M65 283.5h7.5M65 273.5h15M65 263.5h7.5M65 253.5h7.5M65 244.5h7.5M65 234.5h7.5M65 224.5h15M65 215.5h7.5M65 205.5h7.5M65 195.5h7.5M65 185.5h7.5M65 176.5h15M65 166.5h7.5M65 156.5h7.5M65 146.5h7.5M65 137.5h7.5M65 127.5h15M65.5 516V504M77.5 516V510M89.5 516V510M101.5 516V510M113.5 516V510M125.5 516V504M137.5 516V510M149.5 516V510M161.5 516V510M173.5 516V510M184.5 516V504M196.5 516V510M208.5 516V510M220.5 516V510M232.5 516V510M244.5 516V504M256.5 516V510M268.5 516V510M280.5 516V510M292.5 516V510M304.5 516V504M316.5 516V510M328.5 516V510M340.5 516V510M352.5 516V510M364.5 516V504M376.5 516V510M388.5 516V510M400.5 516V510M412.5 516V510M424.5 516V504M435.5 516V510M447.5 516V510M459.5 516V510M471.5 516V510M483.5 516V504M495.5 516V510M507.5 516V510M519.5 516V510M531.5 516V510M543.5 516V504" stroke="#000" stroke-width="1" fill="none"/>
<path d="M65.5 127V516.5M65 127.5H543.5V516.5H65" stroke="#000" stroke-width="1" fill="none"/>
<path d="M542.5 128V515.5H66" stroke="#f00" stroke-width="1" fill="none"/>
<g font-family="Liberation Sans" font-size="17" fill="#000">
<text transform="translate(63,521.9) scale(0.9,1)" text-anchor="end"><tspan font-size="12.5" dy="-0.5">&#8722;</tspan><tspan dy="0.5" dx="1.2">0.2</tspan></text><text transform="translate(63,473.3) scale(0.9,1)" text-anchor="end"><tspan font-size="12.5" dy="-0.5">&#8722;</tspan><tspan dy="0.5" dx="1.2">0.15</tspan></text><text transform="translate(63,424.6) scale(0.9,1)" text-anchor="end"><tspan font-size="12.5" dy="-0.5">&#8722;</tspan><tspan dy="0.5" dx="1.2">0.1</tspan></text><text transform="translate(63,376) scale(0.9,1)" text-anchor="end"><tspan font-size="12.5" dy="-0.5">&#8722;</tspan><tspan dy="0.5" dx="1.2">0.05</tspan></text><text transform="translate(63,327.4) scale(0.9,1)" text-anchor="end">0</text><text transform="translate(63,278.8) scale(0.9,1)" text-anchor="end">0.05</text><text transform="translate(63,230.2) scale(0.9,1)" text-anchor="end">0.1</text><text transform="translate(63,181.5) scale(0.9,1)" text-anchor="end">0.15</text><text transform="translate(63,132.9) scale(0.9,1)" text-anchor="end">0.2</text><text transform="translate(65.5,532) scale(0.9,1)" text-anchor="middle">0</text><text transform="translate(125.2,532) scale(0.9,1)" text-anchor="middle">0.5</text><text transform="translate(185,532) scale(0.9,1)" text-anchor="middle">1</text><text transform="translate(244.8,532) scale(0.9,1)" text-anchor="middle">1.5</text><text transform="translate(304.5,532) scale(0.9,1)" text-anchor="middle">2</text><text transform="translate(364.2,532) scale(0.9,1)" text-anchor="middle">2.5</text><text transform="translate(424,532) scale(0.9,1)" text-anchor="middle">3</text><text transform="translate(483.8,532) scale(0.9,1)" text-anchor="middle">3.5</text><text transform="translate(543.5,532) scale(0.9,1)" text-anchor="middle">4</text>
<text transform="translate(543.5,547.5) scale(0.95,1)" text-anchor="end">time (&#956;s)</text>
<text transform="translate(26,128.5) rotate(-90) scale(0.93,1)" text-anchor="end">asymmetry</text>
</g>
<g font-family="Liberation Mono" font-weight="normal" font-size="9" fill="#000" stroke="#000" stroke-width="0.25">
<text x="608.5" y="89.8">1</text><text x="624.5" y="89.8">NormUp</text><text x="689" y="89.8">4542.0</text><text x="743.5" y="89.8">3.1</text><text x="608.5" y="102.7">2</text><text x="624.5" y="102.7">BgUp</text><text x="689" y="102.7">204.5</text><text x="743.5" y="102.7">1.0</text><text x="608.5" y="115.5">3</text><text x="624.5" y="115.5">PhaseUp</text><text x="689" y="115.5">18.25</text><text x="743.5" y="115.5">0.65</text><text x="608.5" y="128.4">4</text><text x="624.5" y="128.4">NormDown</text><text x="689" y="128.4">4360.5</text><text x="743.5" y="128.4">3.0</text><text x="608.5" y="141.2">5</text><text x="624.5" y="141.2">BgDown</text><text x="689" y="141.2">217.6</text><text x="743.5" y="141.2">1.0</text><text x="608.5" y="154.1">6</text><text x="624.5" y="154.1">PhaseDown</text><text x="689" y="154.1">199.74</text><text x="743.5" y="154.1">0.62</text><text x="608.5" y="167">7</text><text x="624.5" y="167">NormRight</text><text x="689" y="167">621.2</text><text x="743.5" y="167">1.1</text><text x="608.5" y="179.8">8</text><text x="624.5" y="179.8">BgRight</text><text x="689" y="179.8">42.61</text><text x="743.5" y="179.8">0.38</text><text x="608.5" y="192.7">9</text><text x="624.5" y="192.7">PhaseRight</text><text x="689" y="192.7">287.1</text><text x="743.5" y="192.7">1.4</text><text x="608.5" y="205.5">10</text><text x="624.5" y="205.5">AsymSig1</text><text x="689" y="205.5">0.1833</text><text x="743.5" y="205.5">0.0027</text><text x="608.5" y="218.4">11</text><text x="624.5" y="218.4">RateSig1</text><text x="689" y="218.4">2.287</text><text x="743.5" y="218.4">0.043</text><text x="608.5" y="231.3">12</text><text x="624.5" y="231.3">FieldSig1</text><text x="689" y="231.3">101.36</text><text x="743.5" y="231.3">0.37</text><text x="608.5" y="244.1">13</text><text x="624.5" y="244.1">AsymSig2</text><text x="689" y="244.1">0.01752</text><text x="743.5" y="244.1">0.00101</text><text x="608.5" y="257">14</text><text x="624.5" y="257">RateSig2</text><text x="689" y="257">0.525</text><text x="743.5" y="257">0.046</text><text x="608.5" y="269.8">15</text><text x="624.5" y="269.8">FieldSig2</text><text x="689" y="269.8">146.31</text><text x="743.5" y="269.8">0.31</text>
</g>
<g font-family="Liberation Mono" font-weight="bold" font-size="13" fill="#000">
<text x="608.5" y="362.5" xml:space="preserve">asymmetry     10</text><text x="608.5" y="373.9" xml:space="preserve">simplExpo     11</text><text x="608.5" y="385.2" xml:space="preserve">TFieldCos   map1  fun1</text><text x="608.5" y="396.6" xml:space="preserve">+</text><text x="608.5" y="407.9" xml:space="preserve">asymmetry     13</text><text x="608.5" y="419.2" xml:space="preserve">simpleGss     14</text><text x="608.5" y="430.6" xml:space="preserve">TFieldCos   map1  fun2</text><text x="608.5" y="453.3" xml:space="preserve">fun1 = gamma_mu * par12</text><text x="608.5" y="464.6" xml:space="preserve">fun2 = gamma_mu * par15</text>
</g>
<g font-family="Liberation Sans" font-weight="bold" font-size="10" fill="#000">
<text x="25" y="579">musrfit: 2011-07-09, 15:37:46, chisq = 1318.6239441012772 , NDF = 1145 , chisq/NDF = 1.1516366324028622</text>
<text x="205" y="596.7">d2006/deltat_pta_gps_3110,h:3,T0=4.50K,T1=4.70K,B=150.00G,E=??,Y124 TF150G 4.5K (ab)</text>
<text x="205" y="615.6">d2006/deltat_pta_gps_3110,h:4,T0=4.50K,T1=4.70K,B=150.00G,E=??,Y124 TF150G 4.5K (ab)</text>
</g>
<circle cx="105.5" cy="594.5" r="4" fill="none" stroke="#000" stroke-width="1.1"/>
<rect x="101.5" y="609.5" width="8" height="8" fill="none" stroke="#f00" stroke-width="1.2"/>
</svg>
</div></body></html>
